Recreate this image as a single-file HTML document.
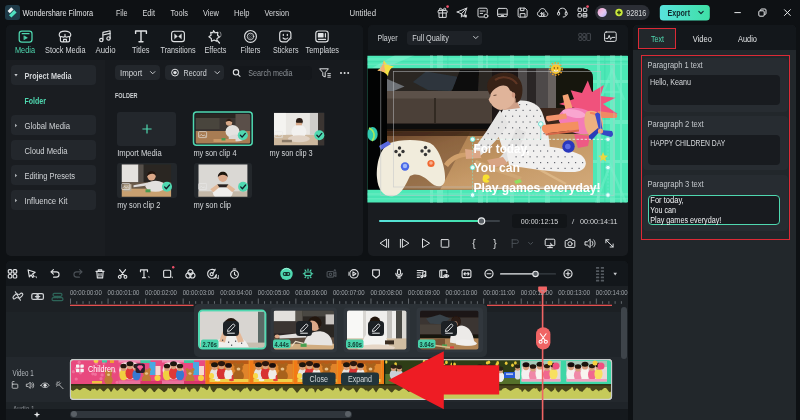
<!DOCTYPE html>
<html><head><meta charset="utf-8"><title>Wondershare Filmora</title>
<style>
html,body{margin:0;padding:0;background:#0e1114;}
body{width:800px;height:420px;overflow:hidden;position:relative;font-family:"Liberation Sans", sans-serif;}
#app{position:absolute;left:0;top:0;width:800px;height:420px;overflow:hidden;background:#0e1114;}
#app div{position:absolute;box-sizing:border-box;}
#app svg{position:absolute;left:0;top:0;will-change:transform;}
svg text{font-family:"Liberation Sans", sans-serif;}
</style></head><body><div id="app">
<div style="left:5.5px;top:25px;width:357.5px;height:231px;background:#171a1e;border-radius:5px;"></div>
<div style="left:5.5px;top:25px;width:357.5px;height:35px;background:#13171b;border-radius:5px 5px 0 0;"></div>
<div style="left:5.5px;top:60px;width:99.5px;height:196px;background:#1a1d21;border-radius:0 0 0 5px;"></div>
<div style="left:10.5px;top:65px;width:85.5px;height:20px;background:#23272c;border-radius:4px;"></div>
<div style="left:10.5px;top:115px;width:85.5px;height:20px;background:#23272c;border-radius:4px;"></div>
<div style="left:10.5px;top:140px;width:85.5px;height:20px;background:#23272c;border-radius:4px;"></div>
<div style="left:10.5px;top:165px;width:85.5px;height:20px;background:#23272c;border-radius:4px;"></div>
<div style="left:10.5px;top:190px;width:85.5px;height:20px;background:#23272c;border-radius:4px;"></div>
<div style="left:115px;top:65.3px;width:45px;height:14.7px;background:#23272c;border-radius:4px;"></div>
<div style="left:165px;top:65.3px;width:59.2px;height:14.7px;background:#23272c;border-radius:4px;"></div>
<div style="left:230px;top:65.6px;width:82.4px;height:14.4px;background:#14171b;border-radius:4px;"></div>
<div style="left:117px;top:112px;width:59px;height:34px;background:#23272c;border-radius:3px;"></div>
<div style="left:367.5px;top:25px;width:260.5px;height:230.7px;background:#191c20;border-radius:5px;"></div>
<div style="left:367.5px;top:25px;width:260.5px;height:25px;background:#13171b;border-radius:5px 5px 0 0;"></div>
<div style="left:367.5px;top:50px;width:260.5px;height:6px;background:#101316;"></div>
<div style="left:367.5px;top:55.7px;width:260px;height:146.8px;background:#4ce8b6;"></div>
<div style="left:407px;top:30.6px;width:75px;height:14px;background:#1e2227;border-radius:3px;"></div>
<div style="left:512px;top:214px;width:54.5px;height:14px;background:#121518;border-radius:3px;"></div>
<div style="left:633px;top:25px;width:162.5px;height:396px;background:#22272b;border-radius:5px 5px 0 0;"></div>
<div style="left:633px;top:25px;width:162.5px;height:25px;background:#13171b;border-radius:5px 5px 0 0;"></div>
<div style="left:638px;top:28px;width:38px;height:21px;background:#22272b;border:1.5px solid #dc2a36;"></div>
<div style="left:641px;top:55px;width:148.5px;height:184.5px;background:transparent;border:1.5px solid #dc2a36;"></div>
<div style="left:643px;top:57.5px;width:145px;height:54px;background:#272c31;border-radius:4px;"></div>
<div style="left:643px;top:115.5px;width:145px;height:54px;background:#272c31;border-radius:4px;"></div>
<div style="left:643px;top:174.5px;width:145px;height:56px;background:#272c31;border-radius:4px;"></div>
<div style="left:647.5px;top:75.2px;width:132.5px;height:30px;background:#181b1f;border-radius:4px;"></div>
<div style="left:647.5px;top:135px;width:132.5px;height:30px;background:#181b1f;border-radius:4px;"></div>
<div style="left:647.5px;top:195px;width:132.5px;height:30px;background:#181b1f;border-radius:4px;border:1px solid #4fd8b0;"></div>
<div style="left:5.5px;top:261px;width:622.5px;height:160px;background:#1c2024;border-radius:5px;"></div>
<div style="left:5.5px;top:261px;width:622.5px;height:25px;background:#13171b;border-radius:5px 5px 0 0;"></div>
<div style="left:5.5px;top:286px;width:622.5px;height:26px;background:#1c2024;"></div>
<div style="left:5.5px;top:312px;width:64.5px;height:108px;background:#1e2327;"></div>
<div style="left:70px;top:312px;width:558px;height:108px;background:#1f2429;"></div>
<div style="left:5.5px;top:357px;width:622.5px;height:45px;background:#23282d;"></div>
<div style="left:70px;top:359px;width:542px;height:41px;background:#c9cc52;border-radius:3px;border:1px solid #e8e8e8;"></div>
<div style="left:193.5px;top:304.4px;width:293.5px;height:52.6px;background:#2b3136;border-radius:5px;"></div>
<div style="left:620.5px;top:306.5px;width:6.5px;height:52px;background:#3e444a;border-radius:3.25px;"></div>
<div style="left:117px;top:163px;width:60px;height:35px;background:#23272b;border-radius:3px;"></div>
<div style="left:193.5px;top:163px;width:58px;height:35px;background:#23272b;border-radius:3px;"></div>
<div style="left:5.5px;top:408.8px;width:622.5px;height:12px;background:#15191d;"></div>
<div style="left:70px;top:410.5px;width:282px;height:7px;background:#30363c;border-radius:3.5px;"></div>
<svg id="overlay" width="800" height="420" viewBox="0 0 800 420">
<defs>
<linearGradient id="av" x1="0" y1="0" x2="1" y2="1"><stop offset="0" stop-color="#f5a0c8"/><stop offset=".55" stop-color="#e8c8f0"/><stop offset="1" stop-color="#a8b0f8"/></linearGradient>
<linearGradient id="ex" x1="0" y1="0" x2="1" y2="0"><stop offset="0" stop-color="#58e2dc"/><stop offset="1" stop-color="#3fe0a6"/></linearGradient>
<filter id="b06" x="-5%" y="-5%" width="110%" height="110%"><feGaussianBlur stdDeviation=".55"/></filter>
<filter id="b1" x="-5%" y="-5%" width="110%" height="110%"><feGaussianBlur stdDeviation="1"/></filter>
<filter id="b2" x="-5%" y="-5%" width="110%" height="110%"><feGaussianBlur stdDeviation="2"/></filter>
<linearGradient id="floor" x1="0" y1="0" x2="1" y2="1"><stop offset="0" stop-color="#6e4628"/><stop offset=".28" stop-color="#b08252"/><stop offset=".6" stop-color="#c69a68"/><stop offset="1" stop-color="#d4ac7c"/></linearGradient>
<filter id="b04" x="-1%" y="-10%" width="102%" height="120%"><feGaussianBlur stdDeviation=".45"/></filter></defs>
<g id="gfx">
<rect x="5" y="5" width="15" height="15" rx="3" fill="#1e3a48"/>
<path d="M11.2 7.2 L13.6 9.4 L9.8 13.2 L7.6 11 Z" fill="#f2f5f6"/>
<path d="M14.2 10 L16.6 12.4 L11.4 17.4 L9 15.2 Z" fill="#4fe0c0"/>
<g transform="translate(442.6 12.6)" fill="none" stroke="#d8dadc" stroke-width="1" stroke-linecap="round" stroke-linejoin="round"><rect x="-4.5" y="-2.2" width="9" height="2.6" rx=".6"/><path d="M-3.6 .4V4.8H3.6V.4M0 -2.2V4.8M0 -2.4C-1.2 -5.4 -4 -4.6 -3 -2.9C-2.4 -2.2 -1 -2.3 0 -2.4C1.2 -5.4 4 -4.6 3 -2.9C2.4 -2.2 1 -2.3 0 -2.4"/></g>
<circle cx="447.6" cy="6.6" r="1.3" fill="#f0506a"/>
<g transform="translate(462 12.6)" fill="none" stroke="#d8dadc" stroke-width="1" stroke-linecap="round" stroke-linejoin="round"><path d="M-4.8 -.6L4.8 -4.6L2 4.2L-.6 1.2L-4.8 -.6ZM-.6 1.2L4.8 -4.6M-.6 1.4V4.6L1 3"/><path d="M2.6 2.2H4.8V4.8H2.6Z" fill="#d8dadc" stroke="none"/></g>
<g transform="translate(482.6 12.6)" fill="none" stroke="#d8dadc" stroke-width="1" stroke-linecap="round" stroke-linejoin="round"><path d="M1.2 4.4H-3.4Q-4.6 4.4 -4.6 3.2V-3.2Q-4.6 -4.4 -3.4 -4.4H3.4Q4.6 -4.4 4.6 -3.2V.6M-2.4 -1.6H2.4M-2.4 .8H0"/><circle cx="3.4" cy="3.4" r="1.9"/></g>
<g transform="translate(502.4 12.6)" fill="none" stroke="#d8dadc" stroke-width="1" stroke-linecap="round" stroke-linejoin="round"><rect x="-4.8" y="-4.2" width="9.6" height="8.2" rx="1.4"/><path d="M-4.6 1.6H4.6M-1.2 3H1.2"/></g>
<g transform="translate(522.6 12.6)" fill="none" stroke="#d8dadc" stroke-width="1" stroke-linecap="round" stroke-linejoin="round"><path d="M-4.5 -3.3Q-4.5 -4.5 -3.3 -4.5H2.4L4.5 -2.4V3.3Q4.5 4.5 3.3 4.5H-3.3Q-4.5 4.5 -4.5 3.3ZM-2.2 -4.4V-2H1.4V-4.4M-2.4 4.4V1H2.4V4.4"/></g>
<g transform="translate(542.6 12.6)" fill="none" stroke="#d8dadc" stroke-width="1" stroke-linecap="round" stroke-linejoin="round"><path d="M-2.8 3.8H2.9C6 3.6 5.8 -.4 3.2 -.8C3 -5 -3 -5.2 -3.4 -1C-6 -.6 -5.8 3.6 -2.8 3.8ZM-1 3V0M-2 1L-1 0L0 1M1.2 0V3M.2 2L1.2 3L2.2 2"/></g>
<g transform="translate(562.4 12.6)" fill="none" stroke="#d8dadc" stroke-width="1" stroke-linecap="round" stroke-linejoin="round"><path d="M-3.8 0V-.8C-3.8 -5.6 3.8 -5.6 3.8 -.8V0M3.8 2.4C3.8 4 2.4 4.4 .8 4.4"/><rect x="-4.8" y="-.6" width="2" height="3.2" rx=".9"/><rect x="2.8" y="-.6" width="2" height="3.2" rx=".9"/></g>
<g transform="translate(582.4 12.6)" fill="none" stroke="#d8dadc" stroke-width="1" stroke-linecap="round" stroke-linejoin="round"><rect x="-4.4" y="-4.4" width="3.4" height="3.4" rx=".6"/><rect x="1" y="-4.4" width="3.4" height="3.4" rx=".6"/><rect x="-4.4" y="1" width="3.4" height="3.4" rx=".6"/><path d="M1 1H4.4V4.4H1ZM1 2.7H4.4"/></g>
<circle cx="587.6" cy="6.6" r="1.3" fill="#f0506a"/>
<rect x="595" y="5" width="54.6" height="15" rx="7.5" fill="#2b2e35"/>
<circle cx="602.2" cy="12.5" r="4.6" fill="url(#av)"/>
<circle cx="619" cy="12.5" r="3.7" fill="#c9e83c"/><path d="M619 10.6V14.4M617.1 12.5H620.9" stroke="#2b3a10" stroke-width="1.4" fill="none"/>
<rect x="659.8" y="5" width="50" height="15.6" rx="3.5" fill="url(#ex)"/>
<path d="M698.8 11.4L701 13.6L703.2 11.4" fill="none" stroke="#10262a" stroke-width="1.1" stroke-linecap="round" stroke-linejoin="round"/>
<path d="M734.400 12.600H740.800" stroke="#e6e8ea" stroke-width="1"/>
<g fill="none" stroke="#e6e8ea" stroke-width="1"><rect x="758.800" y="10.800" width="5.400" height="5.400" rx="1.100"/><path d="M760.600 10.600V10Q760.600 9 761.600 9H765Q766 9 766 10V13.400Q766 14.400 765 14.400H764.400"/></g>
<path d="M784.200 9.400L790.600 15.800M790.600 9.400L784.200 15.800" stroke="#e6e8ea" stroke-width="1"/>
<g transform="translate(25.6 36.6)" fill="none" stroke="#4fd8b0" stroke-width="1.25" stroke-linecap="round" stroke-linejoin="round"><rect x="-6.4" y="-5.4" width="12.8" height="10.8" rx="2.6"/><path d="M-3.4 -2.9H3.4"/><path d="M-1.4 -.6L1.8 1.2L-1.4 3Z" fill="#4fd8b0" stroke-width=".6"/></g>
<g transform="translate(65 36.4)" fill="none" stroke="#dfe1e3" stroke-width="1.15" stroke-linecap="round" stroke-linejoin="round"><path d="M-5.8 -1.6C-5.8 -6.6 5.8 -6.6 5.8 -1.6C5.8 .4 4 .6 3 .2C2 1 1 .8 0 0C-1 .8 -2 1 -3 .2C-4 .6 -5.8 .4 -5.8 -1.600ZM-4.6 .8V4Q-4.6 5.4 -3.200 5.4H3.2Q4.6 5.4 4.6 4V.8M-1.4 5.2V3H1.4V5.2M0 0V-2"/></g>
<g transform="translate(105.5 36.4)" fill="none" stroke="#dfe1e3" stroke-width="1.15" stroke-linecap="round" stroke-linejoin="round"><path d="M-2.6 3.4V-4L4.6 -5.6V1.8"/><circle cx="-4.2" cy="3.6" r="1.7"/><circle cx="3" cy="2" r="1.7"/><path d="M-2.600 -1.4L4.6 -3"/></g>
<g transform="translate(141 36.4)" fill="none" stroke="#dfe1e3" stroke-width="1.4" stroke-linecap="round" stroke-linejoin="round"><path d="M-5.4 -3V-5.4H5.4V-3M0 -5.400V5.4M-2 5.4H2"/></g>
<g transform="translate(178 36.4)" fill="none" stroke="#dfe1e3" stroke-width="1.15" stroke-linecap="round" stroke-linejoin="round"><rect x="-6.4" y="-5.2" width="12.8" height="10.4" rx="2.4"/><path d="M-3.200 -2.2L-.6 0L-3.2 2.2ZM3.2 -2.2L.6 0L3.2 2.200Z" fill="#dfe1e3" stroke-width=".5"/></g>
<g transform="translate(214.5 36.4)" fill="none" stroke="#dfe1e3" stroke-width="1.15" stroke-linecap="round" stroke-linejoin="round"><path d="M-1 -5.800L.6 -3.6L3.400 -4L3 -1.2L5 .6L2.600 2L2.2 4.800L-.4 3.6L-3 4.800L-3.200 2L-5.600 .4L-3.4 -1.2L-3.800 -4L-1.600 -3.6Z"/><path d="M2.8 4.200L5 6.600" stroke-width="1.3"/><path d="M5.6 -4.400C6.8 -3 6.8 -1 6 .4" stroke-width=".8" opacity=".7"/></g>
<g transform="translate(250.5 36.4)" fill="none" stroke="#dfe1e3" stroke-width="1.15" stroke-linecap="round" stroke-linejoin="round"><circle r="5.900"/><circle r="3.300" stroke-width=".8"/><path d="M-2.2 -2L1.200 1.600M-2.8 -.2L.200 2.600M-.6 -2.800L2.400 0" stroke-width=".5" opacity=".8"/></g>
<g transform="translate(285.5 36.4)" fill="none" stroke="#dfe1e3" stroke-width="1.15" stroke-linecap="round" stroke-linejoin="round"><path d="M-5.8 -2.600Q-5.800 -5.400 -3 -5.400H2.6Q5.400 -5.400 5.400 -2.600V1L1.400 5.400H-3Q-5.800 5.400 -5.800 2.600ZM-2.200 -2.200V-1M1.800 -2.200V-1M-2.400 1.600C-1 3 1 3 2.200 1.600"/><path d="M4.400 3.600L6 2" stroke-width=".8" opacity=".7"/></g>
<g transform="translate(322 36.4)" fill="none" stroke="#dfe1e3" stroke-width="1.15" stroke-linecap="round" stroke-linejoin="round"><rect x="-6.200" y="-5.400" width="12.400" height="10.800" rx="2.600"/><path d="M-3.600 -2.800H1V.6H-3.600Z" fill="#dfe1e3"/><path d="M3.400 -2.800V.6M-3.600 2.900H3.600" /></g>
<path d="M14.4 74L17.600 74L16 76.400Z" fill="#c8cbce"/>
<path d="M15 123.8L17.2 125.5L15 127.2Z" fill="#a8acb0"/>
<path d="M15 173.8L17.2 175.5L15 177.2Z" fill="#a8acb0"/>
<path d="M15 198.8L17.2 200.5L15 202.2Z" fill="#a8acb0"/>
<path d="M150.500 71.600L152.700 73.800L154.900 71.600" fill="none" stroke="#c8cbce" stroke-width="1" stroke-linecap="round" stroke-linejoin="round"/>
<circle cx="175" cy="72.600" r="3.400" fill="none" stroke="#dfe1e3" stroke-width="1"/><circle cx="175" cy="72.600" r="1.700" fill="#dfe1e3"/>
<path d="M215.100 71.600L217.300 73.800L219.500 71.600" fill="none" stroke="#c8cbce" stroke-width="1" stroke-linecap="round" stroke-linejoin="round"/>
<circle cx="236" cy="72.300" r="2.700" fill="none" stroke="#dfe1e3" stroke-width="1.100"/><path d="M238 74.300L240 76.300" stroke="#dfe1e3" stroke-width="1.100" stroke-linecap="round"/>
<path d="M319.600 68.800H328.400L325.200 72.600V77L322.800 75.800V72.600Z" fill="none" stroke="#dfe1e3" stroke-width="1" stroke-linejoin="round"/><path d="M327.400 73.600H330.800M327.400 75.400H330.800M327.400 77.200H330.800" stroke="#dfe1e3" stroke-width=".9"/>
<circle cx="341" cy="72.900" r="1" fill="#dfe1e3"/><circle cx="344.600" cy="72.900" r="1" fill="#dfe1e3"/><circle cx="348.200" cy="72.900" r="1" fill="#dfe1e3"/>
<path d="M142.400 129H151.600M147 124.400V133.600" stroke="#4fd8b0" stroke-width="1.2" fill="none"/>
<rect x="193.500" y="112" width="58.700" height="33.300" rx="3" fill="#1b1f23" stroke="#4fd8b0" stroke-width="1.500"/>
<clipPath id="c1"><rect x="195.5" y="114" width="54.7" height="29.4" rx="1.5"/></clipPath>
<g clip-path="url(#c1)"><g transform="translate(195.5 114)" filter="url(#b06)"><rect width="55" height="30" fill="#3b3530"/>
<rect y="17" width="55" height="13" fill="#a87c52"/>
<rect x="0" y="4" width="24" height="11" fill="#4a443e"/>
<rect x="0" y="0" width="55" height="4" fill="#2a2623"/>
<rect x="40" y="0" width="15" height="17" fill="#5a5048"/>
<ellipse cx="37" cy="17.500" rx="7" ry="6.500" fill="#e4e2e0"/>
<ellipse cx="41" cy="24" rx="8" ry="3.500" fill="#dcdad8"/>
<circle cx="33.500" cy="8.500" r="3.200" fill="#d8a888"/>
<path d="M30.300 8C30.300 3.500 37 3.500 37 8.500C35 6.500 32 6.500 30.300 8Z" fill="#2a1c14"/>
<rect x="18" y="25" width="22" height="3" fill="#c89868"/>
<rect x="26" y="24" width="4" height="2.500" fill="#4a9a50"/></g></g>
<g transform="translate(202.6 134.6)" fill="none" stroke="#e8e8e8" stroke-width=".7" opacity=".9"><rect x="-4" y="-3" width="8" height="6" rx=".8"/><path d="M-3.600 2L-1.400 -.2L.4 1.400L1.600 .4L3.600 2.200"/></g>
<circle cx="242.8" cy="135.2" r="5" fill="#4fd8b0"/><path d="M240.4 135.29999999999998L242.10000000000002 137.1L245.3 133.39999999999998" fill="none" stroke="#12202a" stroke-width="1.300" stroke-linecap="round" stroke-linejoin="round"/>
<clipPath id="c2"><rect x="273.9" y="112.8" width="50.3" height="32.5" rx="0"/></clipPath>
<g clip-path="url(#c2)"><g transform="translate(273.9 112.8)" filter="url(#b06)"><rect width="51" height="33" fill="#e9e7e3"/>
<rect y="22" width="51" height="11" fill="#cdb89e"/>
<rect x="0" y="0" width="12" height="22" fill="#f4f3f0"/>
<rect x="44" y="0" width="7" height="33" fill="#3a3632"/>
<rect x="36" y="0" width="8" height="22" fill="#cfcdca"/>
<ellipse cx="25" cy="19" rx="7.500" ry="7" fill="#f2f1ef"/>
<ellipse cx="25" cy="26" rx="11" ry="3.500" fill="#e0d2c4"/>
<circle cx="25.500" cy="8.500" r="3.400" fill="#2a1c14"/>
<rect x="22" y="10" width="6" height="2.500" fill="#d8a888"/>
<rect x="8" y="27" width="10" height="2.500" fill="#8a7a68"/></g></g>
<g transform="translate(278.6 134.6)" fill="none" stroke="#e8e8e8" stroke-width=".7" opacity=".9"><rect x="-4" y="-3" width="8" height="6" rx=".8"/><path d="M-3.600 2L-1.400 -.2L.4 1.400L1.600 .4L3.600 2.200"/></g>
<circle cx="319.3" cy="135.2" r="5" fill="#4fd8b0"/><path d="M316.90000000000003 135.29999999999998L318.6 137.1L321.8 133.39999999999998" fill="none" stroke="#12202a" stroke-width="1.300" stroke-linecap="round" stroke-linejoin="round"/>
<clipPath id="c3"><rect x="121.5" y="164.3" width="49.7" height="32.5" rx="0"/></clipPath>
<g clip-path="url(#c3)"><g transform="translate(121.5 164.3)" filter="url(#b06)"><rect width="50" height="33" fill="#2c2824"/>
<rect x="0" y="0" width="17" height="18" fill="#e4e2de"/>
<rect x="17" y="0" width="5" height="18" fill="#55504a"/>
<rect y="24" width="50" height="9" fill="#c8a070"/>
<rect y="18" width="50" height="6" fill="#6a5a4a"/>
<ellipse cx="34" cy="22" rx="10" ry="5.500" fill="#e2e0de"/>
<path d="M12 21L28 18L28 21L12 23Z" fill="#dedcda"/>
<circle cx="30" cy="12" r="4.200" fill="#dca888"/>
<path d="M25.500 12C25 5.500 35 5.500 34.500 11.500C32 8.500 28 9 25.500 12Z" fill="#20140e"/>
<rect x="24" y="25" width="5" height="3" fill="#4a9a50"/>
<rect x="2" y="20" width="8" height="7" fill="#b8a890"/></g></g>
<g transform="translate(125.8 186.5)" fill="none" stroke="#e8e8e8" stroke-width=".7" opacity=".9"><rect x="-4" y="-3" width="8" height="6" rx=".8"/><path d="M-3.600 2L-1.400 -.2L.4 1.400L1.600 .4L3.600 2.200"/></g>
<circle cx="167" cy="186.8" r="5" fill="#4fd8b0"/><path d="M164.6 186.9L166.3 188.70000000000002L169.5 185.0" fill="none" stroke="#12202a" stroke-width="1.300" stroke-linecap="round" stroke-linejoin="round"/>
<clipPath id="c4"><rect x="198.3" y="164.3" width="49.1" height="32.5" rx="0"/></clipPath>
<g clip-path="url(#c4)"><g transform="translate(198.3 164.3)" filter="url(#b06)"><rect width="50" height="33" fill="#dad8d4"/>
<rect y="27" width="50" height="6" fill="#c4b8a8"/>
<ellipse cx="24.500" cy="28" rx="10" ry="8" fill="#eeedeb"/>
<circle cx="24.500" cy="13" r="4.600" fill="#dcaa8c"/>
<path d="M19.600 13C19 5.500 30 5.500 29.400 13C28 9.500 21 9.500 19.600 13Z" fill="#1c120c"/>
<rect x="19" y="20" width="11" height="3" fill="#2a2420"/>
<path d="M12 25L19 20L21 23L15 28Z" fill="#e0b898"/>
<path d="M37 25L30 20L28 23L34 28Z" fill="#e0b898"/></g></g>
<g transform="translate(202.6 186.5)" fill="none" stroke="#e8e8e8" stroke-width=".7" opacity=".9"><rect x="-4" y="-3" width="8" height="6" rx=".8"/><path d="M-3.600 2L-1.400 -.2L.4 1.400L1.600 .4L3.600 2.200"/></g>
<circle cx="243.1" cy="186.8" r="5" fill="#4fd8b0"/><path d="M240.7 186.9L242.4 188.70000000000002L245.6 185.0" fill="none" stroke="#12202a" stroke-width="1.300" stroke-linecap="round" stroke-linejoin="round"/>
<path d="M473.600 36.400L475.800 38.600L478 36.400" fill="none" stroke="#c8cbce" stroke-width="1" stroke-linecap="round" stroke-linejoin="round"/>
<g fill="none" stroke="#50565c" stroke-width=".8"><rect x="578.800" y="33.400" width="3" height="3" rx=".6"/><rect x="582.800" y="33.400" width="3" height="3" rx=".6"/><rect x="578.800" y="37.400" width="3" height="3" rx=".6"/><rect x="582.800" y="37.400" width="3" height="3" rx=".6"/><rect x="586.800" y="33.400" width="3.600" height="7" rx=".6"/></g>
<g fill="none" stroke="#dfe1e3" stroke-width="1" stroke-linejoin="round" stroke-linecap="round"><rect x="604.600" y="32" width="11.600" height="9.400" rx="1.600"/><path d="M606 38.400L608 38.400L609.200 35.400L610.600 39.400L611.800 37.400L614.800 37.400"/></g>
<clipPath id="pvc"><rect x="367.400" y="55.700" width="260.200" height="146.800"/></clipPath>
<clipPath id="phc"><path d="M387 68.500H583Q593 68.500 593 78.500V189.800H387Z"/></clipPath>
<g clip-path="url(#pvc)"><rect x="367" y="55" width="262" height="149" fill="#4ce8b6"/>
<g opacity=".26" fill="#c0fce8">
<rect x="367" y="58" width="262" height="2.500" opacity=".6"/><rect x="367" y="63.500" width="262" height="1.500" opacity=".6"/>
<rect x="367" y="193" width="262" height="2.500" opacity=".6"/><rect x="367" y="198" width="262" height="1.500" opacity=".6"/>
<rect x="430" y="55" width="3" height="149"/><rect x="437" y="55" width="6" height="149"/>
<rect x="460" y="55" width="2" height="149"/><rect x="478" y="55" width="5" height="149"/><rect x="486" y="55" width="2" height="149"/>
<rect x="510" y="55" width="4" height="149"/><rect x="528" y="55" width="2" height="149"/><rect x="545" y="55" width="5" height="149"/>
<rect x="597" y="55" width="3" height="149"/><rect x="610" y="55" width="5" height="149"/><rect x="620" y="55" width="2" height="149"/>
<rect x="593" y="80" width="36" height="3"/><rect x="593" y="120" width="36" height="4"/><rect x="593" y="160" width="36" height="3"/>
</g>
<g opacity=".14" fill="#18b890">
<rect x="367" y="61" width="262" height="1"/><rect x="367" y="196.500" width="262" height="1"/>
<rect x="447" y="55" width="1.500" height="149"/><rect x="497" y="55" width="1.500" height="149"/><rect x="560" y="55" width="1.500" height="149"/><rect x="604" y="55" width="1.500" height="149"/>
</g>
<path d="M372 68L395 55H415L385 68Z" fill="#8af4d2" opacity=".5"/>
<path d="M600 100L612 70L624 100M604 92H620" stroke="#7af2cc" stroke-width="2.500" fill="none" opacity=".45"/>
<path d="M596 203L610 165L626 203" stroke="#7af2cc" stroke-width="2.500" fill="none" opacity=".45"/>
<rect x="367" y="68.500" width="21" height="121.300" fill="#020303"/>
<path d="M387 68.500H583Q593 68.500 593 78.500V189.800H387Z" fill="#1d1917"/>
<g clip-path="url(#phc)"><g filter="url(#b06)">
 <rect x="380" y="60" width="220" height="70" fill="#1a1614"/>
 <rect x="518" y="66" width="38" height="50" fill="#4e4a48"/>
 <rect x="527" y="66" width="9" height="50" fill="#2c2826"/>
 <rect x="548" y="66" width="8" height="50" fill="#68625e"/>
 <rect x="556" y="66" width="44" height="70" fill="#151211"/>
 <rect x="380" y="124" width="220" height="70" fill="url(#floor)"/>
 <rect x="515" y="108" width="80" height="26" fill="#3a281c"/>
 <rect x="380" y="122" width="150" height="9" fill="#100c0a"/>
 <rect x="380" y="129" width="120" height="7" fill="#2c1a10" opacity=".7"/>
 <rect x="380" y="98" width="112" height="25.500" rx="2" fill="#4b4139"/>
 <rect x="380" y="90.500" width="112" height="8" fill="#5b5148"/>
 <rect x="380" y="69" width="112" height="22" fill="#2b2724"/>
 <path d="M435 98V123" stroke="#2a2420" stroke-width="1.600"/>
 <path d="M413 82L426 71.500L464.500 78L450.500 91L428 90Z" fill="#2d363e"/>
 <path d="M386 78.500L404.500 86.500L393.600 91L386 91Z" fill="#6c7074"/>
 <path d="M460 70H479L478 91H452Z" fill="#0b0909"/>
 <path d="M387 132L470 132L440 190L387 190Z" fill="#3a2216" opacity=".3"/>
 <path d="M444 164C452 152 468 150 480 155L482 158.500C470 154 456 156 448 167Z" fill="#d0a06c"/>
 <path d="M476 160L522 177L520 180L474 164Z" fill="#cfa674"/>
 <path d="M522 160L566 184" stroke="#dcb686" stroke-width="2.500"/>
 <!-- kid -->
 <path d="M497 132C497 120 502 106 512 102C524 98 538 102 542 112C548 128 550 142 550 154L522 156L503 150Z" fill="#edeceb"/>
 <path d="M500 110C492 122 482 140 473 149L480 156C491 147 502 134 508 124Z" fill="#e6e5e4"/>
 <path d="M516 128C512 140 506 152 498 159L505 164C514 156 522 144 526 132Z" fill="#e2e1e0"/>
 <path d="M506 149C522 143 562 145 581 155C589 161 587 171 575 172C556 172.500 528 169 509 165Z" fill="#f1f0ef"/>
 <path d="M465 149L480 151L481 158L466 159Z" fill="#dca888"/>
 <path d="M487 160L503 157L508 164L492 168Z" fill="#d8a484"/>
 <path d="M505 100L516 98L520 108L504 110Z" fill="#cfa088"/>
 <path d="M492 87C496 83 512 84 516 92L514 102C511 108 503 111 498 109.500C495 108 492 106 491.500 104L490 102.500L488.600 99.500L490.500 96C490 93 491 90 492 87Z" fill="#e0b49a"/>
 <path d="M490 95C482 82 492 72 506 72.500C519 73 525 84 521.500 97C520.500 100.500 518 103 515.500 102.500C516.500 98 514 92 510 90.500C509 87 506 85 503 85.500C498 86 493 89 490 95Z" fill="#372117"/>
 <path d="M495 80C501 75.500 512 76.500 517 84" stroke="#6c3e2a" stroke-width="2.200" fill="none" opacity=".75"/>
 <ellipse cx="513.500" cy="95" rx="1.800" ry="2.800" fill="#d29a82"/>
 <path d="M493.500 95.500L496.500 95" stroke="#4a2e22" stroke-width=".8"/>
</g>
<g fill="#2a2e3a" opacity=".7"><rect x="519.0" y="104.0" width="1.200" height="1.200"/><rect x="526.0" y="104.0" width="1.200" height="1.200"/><rect x="508.5" y="109.8" width="1.200" height="1.200"/><rect x="515.5" y="109.8" width="1.200" height="1.200"/><rect x="522.5" y="109.8" width="1.200" height="1.200"/><rect x="529.5" y="109.8" width="1.200" height="1.200"/><rect x="536.5" y="109.8" width="1.200" height="1.200"/><rect x="505.0" y="115.6" width="1.200" height="1.200"/><rect x="512.0" y="115.6" width="1.200" height="1.200"/><rect x="519.0" y="115.6" width="1.200" height="1.200"/><rect x="526.0" y="115.6" width="1.200" height="1.200"/><rect x="533.0" y="115.6" width="1.200" height="1.200"/><rect x="540.0" y="115.6" width="1.200" height="1.200"/><rect x="501.5" y="121.4" width="1.200" height="1.200"/><rect x="508.5" y="121.4" width="1.200" height="1.200"/><rect x="515.5" y="121.4" width="1.200" height="1.200"/><rect x="522.5" y="121.4" width="1.200" height="1.200"/><rect x="529.5" y="121.4" width="1.200" height="1.200"/><rect x="536.5" y="121.4" width="1.200" height="1.200"/><rect x="498.0" y="127.2" width="1.200" height="1.200"/><rect x="505.0" y="127.2" width="1.200" height="1.200"/><rect x="512.0" y="127.2" width="1.200" height="1.200"/><rect x="519.0" y="127.2" width="1.200" height="1.200"/><rect x="526.0" y="127.2" width="1.200" height="1.200"/><rect x="533.0" y="127.2" width="1.200" height="1.200"/><rect x="540.0" y="127.2" width="1.200" height="1.200"/><rect x="487.5" y="133.0" width="1.200" height="1.200"/><rect x="494.5" y="133.0" width="1.200" height="1.200"/><rect x="501.5" y="133.0" width="1.200" height="1.200"/><rect x="508.5" y="133.0" width="1.200" height="1.200"/><rect x="515.5" y="133.0" width="1.200" height="1.200"/><rect x="522.5" y="133.0" width="1.200" height="1.200"/><rect x="529.5" y="133.0" width="1.200" height="1.200"/><rect x="536.5" y="133.0" width="1.200" height="1.200"/><rect x="543.5" y="133.0" width="1.200" height="1.200"/><rect x="484.0" y="138.8" width="1.200" height="1.200"/><rect x="491.0" y="138.8" width="1.200" height="1.200"/><rect x="505.0" y="138.8" width="1.200" height="1.200"/><rect x="512.0" y="138.8" width="1.200" height="1.200"/><rect x="519.0" y="138.8" width="1.200" height="1.200"/><rect x="526.0" y="138.8" width="1.200" height="1.200"/><rect x="533.0" y="138.8" width="1.200" height="1.200"/><rect x="540.0" y="138.8" width="1.200" height="1.200"/><rect x="480.5" y="144.6" width="1.200" height="1.200"/><rect x="487.5" y="144.6" width="1.200" height="1.200"/><rect x="508.5" y="144.6" width="1.200" height="1.200"/><rect x="515.5" y="144.6" width="1.200" height="1.200"/><rect x="522.5" y="144.6" width="1.200" height="1.200"/><rect x="529.5" y="144.6" width="1.200" height="1.200"/><rect x="536.5" y="144.6" width="1.200" height="1.200"/><rect x="543.5" y="144.6" width="1.200" height="1.200"/><rect x="484.0" y="150.4" width="1.200" height="1.200"/><rect x="512.0" y="150.4" width="1.200" height="1.200"/><rect x="519.0" y="150.4" width="1.200" height="1.200"/><rect x="526.0" y="150.4" width="1.200" height="1.200"/><rect x="533.0" y="150.4" width="1.200" height="1.200"/><rect x="540.0" y="150.4" width="1.200" height="1.200"/><rect x="547.0" y="150.4" width="1.200" height="1.200"/><rect x="554.0" y="150.4" width="1.200" height="1.200"/><rect x="515.5" y="156.2" width="1.200" height="1.200"/><rect x="522.5" y="156.2" width="1.200" height="1.200"/><rect x="529.5" y="156.2" width="1.200" height="1.200"/><rect x="536.5" y="156.2" width="1.200" height="1.200"/><rect x="543.5" y="156.2" width="1.200" height="1.200"/><rect x="550.5" y="156.2" width="1.200" height="1.200"/><rect x="557.5" y="156.2" width="1.200" height="1.200"/><rect x="564.5" y="156.2" width="1.200" height="1.200"/><rect x="571.5" y="156.2" width="1.200" height="1.200"/><rect x="512.0" y="162.0" width="1.200" height="1.200"/><rect x="519.0" y="162.0" width="1.200" height="1.200"/><rect x="526.0" y="162.0" width="1.200" height="1.200"/><rect x="533.0" y="162.0" width="1.200" height="1.200"/><rect x="540.0" y="162.0" width="1.200" height="1.200"/><rect x="547.0" y="162.0" width="1.200" height="1.200"/><rect x="554.0" y="162.0" width="1.200" height="1.200"/><rect x="561.0" y="162.0" width="1.200" height="1.200"/><rect x="568.0" y="162.0" width="1.200" height="1.200"/><rect x="575.0" y="162.0" width="1.200" height="1.200"/><rect x="582.0" y="162.0" width="1.200" height="1.200"/><rect x="536.5" y="167.8" width="1.200" height="1.200"/><rect x="543.5" y="167.8" width="1.200" height="1.200"/><rect x="550.5" y="167.8" width="1.200" height="1.200"/><rect x="557.5" y="167.8" width="1.200" height="1.200"/><rect x="564.5" y="167.8" width="1.200" height="1.200"/><rect x="571.5" y="167.8" width="1.200" height="1.200"/><rect x="578.5" y="167.8" width="1.200" height="1.200"/></g></g>
<!-- pink burst + plane -->
<path d="M587.800 80.500L592 92L604 85L600.500 96L615.700 97.800L603 104L617.800 114L600 113L598 126L586 116L572 122L575 108L559 104L574 99L570.700 90.300L582 93Z" fill="#f0527c"/>
<g filter="url(#b06)">
<path d="M562.500 95.500L568 94L572.500 108L565.500 110Z" fill="#f4a274"/>
<path d="M598 111L616 113.500Q618.500 116 616 118L598 118Z" fill="#f08a64"/>
<ellipse cx="579" cy="121" rx="21" ry="12.500" transform="rotate(14 579 121)" fill="#f47cb6"/>
<ellipse cx="574" cy="113.500" rx="12" ry="4" transform="rotate(10 574 113.500)" fill="#f9a6d0"/>
<path d="M586 112C594 108 603 114 603 124C603 132 596 137 589 135C584 128 583 119 586 112Z" fill="#eeb080"/>
<path d="M590 113C596 112 600 118 600 124C600 130 596 134 592 134" stroke="#f4845c" stroke-width="2" fill="none"/>
<path d="M546.500 116L566 113.500L567 118.500L548 121.500Q545 119 546.500 116Z" fill="#f4946c"/>
<path d="M542.500 125L578 121.500L579 129.500L545 133.500Q540.500 130 542.500 125Z" fill="#f4905f"/>
<path d="M545 133.500L579 129.500L579 131.500L546 135.500Z" fill="#d86848"/>
<path d="M574 134L590 136L588 146L578 148Z" fill="#ee5a84"/>
<circle cx="568.500" cy="146.500" r="6.200" fill="#2a38bc"/>
<circle cx="567.800" cy="146.500" r="2.800" fill="#5c6ce4"/>
<path d="M599 130L595 114Q597.500 111 600 114L602.500 130Z" fill="#3a4ccc"/>
<path d="M600 130L612 131Q614.500 135 611 137L600 134Z" fill="#3446c4"/>
<path d="M600 131L592 140Q588 139 589 135.500L598 128Z" fill="#2c3cb8"/>
<circle cx="600.500" cy="131" r="2.600" fill="#f0a070"/>
</g>
<!-- controller -->
<g filter="url(#b06)">
<path d="M390 143C400 139 420 139 430 143C440 148 446 170 445 180C444 188 436 188 430 182C424 176 416 172 410 176C406 184 402 194 394 196C384 198 378 190 377 178C376 164 380 148 390 143Z" fill="#f1ecdc"/>
<path d="M379 146L388 141L391 144L381 150Z" fill="#5868e0"/>
<circle cx="399.500" cy="148" r="1.700" fill="#343434"/><circle cx="396" cy="151.500" r="1.700" fill="#343434"/><circle cx="403" cy="151.500" r="1.700" fill="#343434"/><circle cx="399.500" cy="155" r="1.700" fill="#343434"/>
<circle cx="425.500" cy="147.500" r="1.700" fill="#343434"/><circle cx="422" cy="151" r="1.700" fill="#343434"/><circle cx="429" cy="151" r="1.700" fill="#343434"/><circle cx="425.500" cy="154.500" r="1.700" fill="#343434"/>
<circle cx="405" cy="166.500" r="4.200" fill="#4868e8"/><circle cx="405" cy="166" r="2.200" fill="#a0b8f8"/>
<circle cx="431" cy="163.500" r="3.600" fill="#f06830"/><circle cx="431" cy="163" r="1.800" fill="#f8b090"/>
</g>
<!-- deco -->
<path d="M384 60Q385.500 65.500 394 66.500Q388.500 69 388 76.300Q385 71 377.400 70.500Q383 67 384 60Z" fill="#f2e244"/>
<path d="M384 60Q383 67 377.400 70.500Q382 70.800 385.500 72.500Q384 67 384 60Z" fill="#f4b070"/>
<circle cx="556" cy="69" r="5" fill="#f8c830"/><circle cx="556" cy="69" r="6.200" fill="none" stroke="#f0a020" stroke-width="1.500" stroke-dasharray="1.500 1.500"/>
<circle cx="554.300" cy="68" r=".7" fill="#603010"/><circle cx="557.700" cy="68" r=".7" fill="#603010"/><path d="M554 70.500Q556 72 558 70.500" stroke="#fff" stroke-width="1" fill="none"/>
<ellipse cx="372.500" cy="134" rx="5.200" ry="7" fill="#30c8b0"/><path d="M369 128C374 130 376 136 372 141" stroke="#a0e860" stroke-width="1.600" fill="none"/>
<path d="M603 152L604.600 155.400L608 155.800L605.400 158L606.200 161.400L603 159.600L600 161.400L600.800 158L598.200 155.800L601.600 155.400Z" fill="#e8d840"/>
<path d="M483 176C486 173 490 175 489.500 178L487 179.500L489.500 181C488 184 483 183 482.500 179.500Z" fill="#f8e030"/>
<path d="M514 181L520 179L522 182L516 184Z" fill="#90e060"/>
<!-- selection boxes -->
<g fill="none" stroke="#c0c4c8" stroke-width=".7" opacity=".7">
<rect x="380.800" y="64.300" width="233.200" height="131"/>
<rect x="393.500" y="71.400" width="207.200" height="115.600"/>
</g>
<path d="M472.600 139.300H608" stroke="#e8fff8" stroke-width=".8" stroke-dasharray="2.500 1.500" fill="none"/>
<path d="M472.600 139.300V195M608 139.300V195M472.600 195H608" stroke="#7fe8d8" stroke-width=".7" stroke-dasharray="2 1.500" fill="none" opacity=".8"/>
<path d="M540.800 124V139" stroke="#7fe8d8" stroke-width=".7" fill="none"/>
<g fill="#e8fffa" stroke="#6fe0d0" stroke-width="1">
<circle cx="472.600" cy="139.300" r="2.300"/><circle cx="472.600" cy="167.600" r="2.300"/><circle cx="472.600" cy="195" r="2.300"/>
<circle cx="608" cy="139.300" r="2.300"/><circle cx="608" cy="167.600" r="2.300"/><circle cx="608" cy="195" r="2.300"/>
<circle cx="540.800" cy="124" r="2.300"/>
</g>
</g>
<g clip-path="url(#pvc)" font-weight="bold" fill="#ffffff" style="font-family:'DejaVu Sans','Liberation Sans',sans-serif"><text x="473.500" y="152.600" font-size="12.5" textLength="56" lengthAdjust="spacingAndGlyphs">For today,</text><text x="473.500" y="171.700" font-size="12.5" textLength="46.5" lengthAdjust="spacingAndGlyphs">You can</text><text x="473.500" y="191.700" font-size="12.5" textLength="127" lengthAdjust="spacingAndGlyphs">Play games everyday!</text></g>
<path d="M474 188.300H600" stroke="#ffffff" stroke-width=".9" opacity=".85" clip-path="url(#pvc)"/>
<rect x="379" y="220" width="121" height="2" rx="1" fill="#3a4046"/>
<rect x="379" y="219.900" width="102.500" height="2.200" rx="1.100" fill="url(#ex)"/>
<circle cx="481.500" cy="221" r="3.200" fill="#5a6066" stroke="#e8eaec" stroke-width="1.200"/>
<g transform="translate(384 243.4)" fill="none" stroke="#dfe1e3" stroke-width="1" stroke-linecap="round" stroke-linejoin="round"><path d="M2.600 -4V4L-3.600 0ZM4.600 -4V4"/></g>
<g transform="translate(405 243.4)" fill="none" stroke="#dfe1e3" stroke-width="1" stroke-linecap="round" stroke-linejoin="round"><path d="M-2.600 -4V4L3.600 0ZM-4.600 -4V4"/></g>
<g transform="translate(425.5 243.4)" fill="none" stroke="#dfe1e3" stroke-width="1" stroke-linecap="round" stroke-linejoin="round"><path d="M-3 -4.200V4.200L3.800 0Z"/></g>
<g transform="translate(445 243.4)" fill="none" stroke="#dfe1e3" stroke-width="1" stroke-linecap="round" stroke-linejoin="round"><rect x="-3.800" y="-3.800" width="7.600" height="7.600" rx=".6"/></g>
<g transform="translate(515 243.4)" fill="none" stroke="#4a5056" stroke-width="1" stroke-linecap="round" stroke-linejoin="round"><path d="M-2.800 -3.800V4.200M-2.800 -3.600H1.600Q3.400 -3.600 3.400 -1.800Q3.400 0 1.600 0H-2.800"/></g>
<path d="M528.600 242.400L530.600 244.400L532.600 242.400" fill="none" stroke="#4a5056" stroke-width="1" stroke-linecap="round" stroke-linejoin="round"/>
<g transform="translate(550 243.4)" fill="none" stroke="#dfe1e3" stroke-width="1" stroke-linecap="round" stroke-linejoin="round"><rect x="-4.800" y="-4.200" width="9.600" height="6.400" rx="1"/><path d="M-2.400 4.200H2.400M0 2.400V4"/><path d="M.6 -.2L3 2.200L1.400 2.200Z" fill="#dfe1e3" stroke-width=".6"/></g>
<g transform="translate(570 243.4)" fill="none" stroke="#dfe1e3" stroke-width="1" stroke-linecap="round" stroke-linejoin="round"><path d="M-4.800 -2.200Q-4.800 -3 -4 -3H-2.400L-1.600 -4.400H1.600L2.400 -3H4Q4.800 -3 4.800 -2.200V3.200Q4.800 4 4 4H-4Q-4.800 4 -4.800 3.200Z"/><circle cx="0" cy=".4" r="2.100"/></g>
<g transform="translate(590 243.4)" fill="none" stroke="#dfe1e3" stroke-width="1" stroke-linecap="round" stroke-linejoin="round"><path d="M-4.600 -1.600H-2.600L.2 -4.200V4.200L-2.600 1.600H-4.600Z"/><path d="M2 -2.200C3.200 -1 3.200 1 2 2.200M3.600 -3.600C5.600 -1.600 5.600 1.600 3.600 3.600"/></g>
<g transform="translate(609.5 243.4)" fill="none" stroke="#dfe1e3" stroke-width="1" stroke-linecap="round" stroke-linejoin="round"><path d="M-3.600 -3.600L3.600 3.600M-3.600 -.6V-3.600H-.6M3.600 .6V3.600H.6"/></g>
<g transform="translate(12.5 273.8)" fill="none" stroke="#dfe1e3" stroke-width="1.300" stroke-linecap="round" stroke-linejoin="round"><g transform="scale(.88)"><rect x="-4.800" y="-4.800" width="4" height="4" rx="1.300"/><rect x=".8" y="-4.800" width="4" height="4" rx="1.300"/><rect x="-4.800" y=".8" width="4" height="4" rx="1.300"/><rect x=".8" y=".8" width="4" height="4" rx="1.300"/></g></g>
<g transform="translate(32 273.8)" fill="none" stroke="#dfe1e3" stroke-width="1.300" stroke-linecap="round" stroke-linejoin="round"><g transform="scale(.88)"><path d="M-4.400 -4.400L3.600 -1.800L.6 .2L2.400 3L.8 4L-1 1.200L-3 3.400Z"/><path d="M3.400 3.200H5.400V5.200Z" fill="#dfe1e3" stroke="none"/></g></g>
<g transform="translate(55 273.8)" fill="none" stroke="#dfe1e3" stroke-width="1.300" stroke-linecap="round" stroke-linejoin="round"><g transform="scale(.88)"><path d="M-1.800 -4.800L-4.600 -2.200L-1.800 .4M-4.400 -2.200H1.600C5.600 -2.200 5.600 3.800 1.600 3.800H-1.600"/></g></g>
<g transform="translate(78 273.8)" fill="none" stroke="#4a5056" stroke-width="1.300" stroke-linecap="round" stroke-linejoin="round"><g transform="scale(.88)"><path d="M1.800 -4.800L4.600 -2.200L1.800 .4M4.400 -2.200H-1.600C-5.600 -2.200 -5.600 3.800 -1.600 3.800H1.600"/></g></g>
<g transform="translate(100 273.8)" fill="none" stroke="#dfe1e3" stroke-width="1.300" stroke-linecap="round" stroke-linejoin="round"><g transform="scale(.88)"><path d="M-4.600 -2.800H4.600M-2 -2.800V-4.400H2V-2.800M-3.600 -2.600L-3 4.600H3L3.600 -2.600M-1.200 -.4V2.600M1.200 -.4V2.600"/></g></g>
<g transform="translate(122.6 273.8)" fill="none" stroke="#dfe1e3" stroke-width="1.300" stroke-linecap="round" stroke-linejoin="round"><g transform="scale(.88)"><path d="M-3.400 -4.800L2.400 2.400M3.400 -4.800L-2.400 2.400"/><circle cx="-3.200" cy="3.400" r="1.600"/><circle cx="3.200" cy="3.400" r="1.600"/></g></g>
<g transform="translate(144.5 273.8)" fill="none" stroke="#dfe1e3" stroke-width="1.300" stroke-linecap="round" stroke-linejoin="round"><g transform="scale(.88)"><path d="M-4.600 -2.400V-4.400H3.400V-2.400M-.6 -4.400V4.400M-2.200 4.400H1"/><path d="M3.600 3H5.600V5Z" fill="#dfe1e3" stroke="none"/></g></g>
<g transform="translate(167.5 273.8)" fill="none" stroke="#dfe1e3" stroke-width="1.300" stroke-linecap="round" stroke-linejoin="round"><g transform="scale(.88)"><rect x="-4.400" y="-4" width="8" height="8" rx="1.300"/><path d="M4 3.400H6V5.400Z" fill="#dfe1e3" stroke="none"/></g></g>
<circle cx="173.200" cy="267.200" r="1.200" fill="#f0506a"/>
<g transform="translate(190.4 273.8)" fill="none" stroke="#dfe1e3" stroke-width="1.300" stroke-linecap="round" stroke-linejoin="round"><g transform="scale(.88)"><circle cx="0" cy="-1.800" r="2.900"/><circle cx="-2.300" cy="1.900" r="2.900"/><circle cx="2.300" cy="1.900" r="2.900"/></g></g>
<g transform="translate(212 273.8)" fill="none" stroke="#dfe1e3" stroke-width="1.300" stroke-linecap="round" stroke-linejoin="round"><g transform="scale(.88)"><path d="M3.200 -3.800A5 5 0 1 0 4.900 1"/><circle cx="-.4" cy=".4" r="1.700"/><path d="M1.200 -.6L3.600 -5.200"/></g></g>
<g transform="translate(234.5 273.8)" fill="none" stroke="#dfe1e3" stroke-width="1.300" stroke-linecap="round" stroke-linejoin="round"><g transform="scale(.88)"><circle cx="0" cy=".6" r="4.400"/><path d="M-1.400 -5.400H1.400M0 -1.800V.8L1.600 1.800"/></g></g>
<circle cx="286.500" cy="273.900" r="6.200" fill="#4fd8b0"/><path d="M282.500 270.400A5 5 0 0 1 290.500 270.400" stroke="#b8f8e4" stroke-width="1" fill="none" opacity=".8"/><rect x="282.700" y="271.900" width="7.600" height="4" rx="2" fill="#15302c"/><circle cx="284.700" cy="273.900" r=".9" fill="#4fd8b0"/><circle cx="288.300" cy="273.900" r=".9" fill="#4fd8b0"/>
<g transform="translate(308 273.8)" fill="none" stroke="#4fd8b0" stroke-width="1.300" stroke-linecap="round" stroke-linejoin="round"><g transform="scale(.88)"><rect x="-3.600" y="-2" width="7.200" height="4" rx=".8"/><path d="M-5.400 0H-3.800M3.800 0H5.400M0 -5.400V-3.800M0 3.800V5.400M-3.400 -4.400L-2.600 -3.400M3.400 -4.400L2.600 -3.400M-3.400 4.400L-2.600 3.400M3.400 4.400L2.600 3.400"/></g></g>
<g transform="translate(331.5 273.8)" fill="none" stroke="#4a5056" stroke-width="1.300" stroke-linecap="round" stroke-linejoin="round"><g transform="scale(.88)"><rect x="-5" y="-2.600" width="7.600" height="6.400" rx="1.200"/><path d="M2.800 -.6L5 -2V3L2.800 1.600"/><circle cx="-1.200" cy=".6" r="1.400"/><path d="M3.800 -4.800V-3.200M3 -4H4.600"/></g></g>
<g transform="translate(354 273.8)" fill="none" stroke="#dfe1e3" stroke-width="1.300" stroke-linecap="round" stroke-linejoin="round"><g transform="scale(.88)"><circle r="4.800"/><path d="M-1.200 -2.200L2.200 0L-1.200 2.200Z"/><path d="M-6 -2A6.400 6.400 0 0 0 -6 2" stroke-width=".7"/></g></g>
<g transform="translate(376 273.8)" fill="none" stroke="#dfe1e3" stroke-width="1.300" stroke-linecap="round" stroke-linejoin="round"><g transform="scale(.88)"><path d="M-3.800 -4.400H3.800V1.600L0 4.800L-3.800 1.600Z"/></g></g>
<g transform="translate(399 273.8)" fill="none" stroke="#dfe1e3" stroke-width="1.300" stroke-linecap="round" stroke-linejoin="round"><g transform="scale(.88)"><rect x="-1.700" y="-5" width="3.400" height="6.200" rx="1.700"/><path d="M-3.600 -.6C-3.600 4 3.600 4 3.600 -.6M0 2.900V4.800M-1.600 4.800H1.600"/></g></g>
<g transform="translate(421.5 273.8)" fill="none" stroke="#dfe1e3" stroke-width="1.300" stroke-linecap="round" stroke-linejoin="round"><g transform="scale(.88)"><path d="M-4.800 -3.800H2M-4.800 -1.200H-.4M-4.800 1.400H-1.400M-4.800 4H-2.400M1.400 3V-2L4.800 -2.800V2"/><circle cx=".4" cy="3.200" r="1.100"/><circle cx="3.800" cy="2.200" r="1.100"/></g></g>
<g transform="translate(444 273.8)" fill="none" stroke="#dfe1e3" stroke-width="1.300" stroke-linecap="round" stroke-linejoin="round"><g transform="scale(.88)"><path d="M-.6 4H-3.600Q-4.800 4 -4.800 2.800V-3Q-4.800 -4.200 -3.600 -4.200H2Q3.200 -4.200 3.200 -3V-1.400M-2.600 -4V4"/><path d="M-.4 2.400C1 .2 4 .2 5.400 2.400C4 4.600 1 4.600 -.4 2.400Z"/><circle cx="2.500" cy="2.400" r=".8"/></g></g>
<g transform="translate(466.5 273.8)" fill="none" stroke="#dfe1e3" stroke-width="1.300" stroke-linecap="round" stroke-linejoin="round"><g transform="scale(.88)"><rect x="-5" y="-4.400" width="10" height="8.800" rx="1.600"/><path d="M-2.800 0H2.800M-1.600 -1.400L-3 0L-1.600 1.400M1.600 -1.400L3 0L1.600 1.400"/></g></g>
<g transform="translate(489 273.8)" fill="none" stroke="#dfe1e3" stroke-width="1.300" stroke-linecap="round" stroke-linejoin="round"><g transform="scale(.88)"><circle r="4.600"/><path d="M-2.200 0H2.200"/></g></g>
<rect x="500" y="273.300" width="56" height="1.200" rx=".6" fill="#3a4046"/><rect x="500" y="273.200" width="35.500" height="1.400" rx=".7" fill="#dfe1e3"/><circle cx="535.500" cy="273.900" r="2.700" fill="#5a6066" stroke="#e8eaec" stroke-width="1.100"/>
<g transform="translate(568 273.8)" fill="none" stroke="#dfe1e3" stroke-width="1.300" stroke-linecap="round" stroke-linejoin="round"><g transform="scale(.88)"><circle r="4.600"/><path d="M-2.200 0H2.200M0 -2.200V2.200"/></g></g>
<g fill="#555b61"><rect x="596" y="267" width="3.200" height="1.700" rx=".3"/><rect x="596" y="270.2" width="3.200" height="1.700" rx=".3"/><rect x="596" y="273.4" width="3.200" height="1.700" rx=".3"/><rect x="596" y="276.6" width="3.200" height="1.700" rx=".3"/><rect x="596" y="279.8" width="3.200" height="1.700" rx=".3"/><rect x="600.8" y="267" width="3.200" height="1.700" rx=".3"/><rect x="600.8" y="270.2" width="3.200" height="1.700" rx=".3"/><rect x="600.8" y="273.4" width="3.200" height="1.700" rx=".3"/><rect x="600.8" y="276.6" width="3.200" height="1.700" rx=".3"/><rect x="600.8" y="279.8" width="3.200" height="1.700" rx=".3"/></g>
<path d="M613.400 272.800H617L615.200 275.400Z" fill="#c8cbce"/>
<g transform="translate(17.9 296)" fill="none" stroke="#d0d3d6" stroke-width="1.250" stroke-linecap="round" stroke-linejoin="round"><path d="M-1.400 1.400L-2.400 2.400C-4.400 4.400 -6.400 2 -4.600 .2L-2.600 -1.800C-1.600 -2.800 -.4 -2.600 .2 -1.800M1.400 -1.400L2.400 -2.400C4.400 -4.400 6.400 -2 4.600 -.2L2.600 1.800C1.600 2.800 .4 2.600 -.2 1.800M-2.800 -4.600L2.800 4.600" transform="scale(.92)"/></g>
<g transform="translate(37.6 296.5)" fill="none" stroke="#d0d3d6" stroke-width="1.250" stroke-linecap="round" stroke-linejoin="round"><rect x="-5.800" y="-2.900" width="6.400" height="5.800" rx="1.500"/><rect x="-.6" y="-2.900" width="6.400" height="5.800" rx="1.500"/><path d="M-2.200 0H2.200"/></g>
<g transform="translate(57.5 297)" fill="none" stroke="#2d6458" stroke-width="1.250" stroke-linecap="round" stroke-linejoin="round"><rect x="-4.400" y="-3.700" width="8.800" height="3" rx="1.200"/><rect x="-5.400" y=".7" width="10.800" height="3" rx="1.200"/><path d="M0 -.7V.7"/></g>
<path d="M70.50 298.500V303.800M76.76 301.200V303.800M83.02 301.200V303.800M89.28 301.200V303.800M95.54 301.200V303.800M101.80 301.200V303.800M108.06 298.500V303.800M114.32 301.200V303.800M120.58 301.200V303.800M126.84 301.200V303.800M133.10 301.200V303.800M139.36 301.200V303.800M145.62 298.500V303.800M151.88 301.200V303.800M158.14 301.200V303.800M164.40 301.200V303.800M170.66 301.200V303.800M176.92 301.200V303.800M183.18 298.500V303.800M189.44 301.200V303.800M195.70 301.200V303.800M201.96 301.200V303.800M208.22 301.200V303.800M214.48 301.200V303.800M220.74 298.500V303.800M227.00 301.200V303.800M233.26 301.200V303.800M239.52 301.200V303.800M245.78 301.200V303.800M252.04 301.200V303.800M258.30 298.500V303.800M264.56 301.200V303.800M270.82 301.200V303.800M277.08 301.200V303.800M283.34 301.200V303.800M289.60 301.200V303.800M295.86 298.500V303.800M302.12 301.200V303.800M308.38 301.200V303.800M314.64 301.200V303.800M320.90 301.200V303.800M327.16 301.200V303.800M333.42 298.500V303.800M339.68 301.200V303.800M345.94 301.200V303.800M352.20 301.200V303.800M358.46 301.200V303.800M364.72 301.200V303.800M370.98 298.500V303.800M377.24 301.200V303.800M383.50 301.200V303.800M389.76 301.200V303.800M396.02 301.200V303.800M402.28 301.200V303.800M408.54 298.500V303.800M414.80 301.200V303.800M421.06 301.200V303.800M427.32 301.200V303.800M433.58 301.200V303.800M439.84 301.200V303.800M446.10 298.500V303.800M452.36 301.200V303.800M458.62 301.200V303.800M464.88 301.200V303.800M471.14 301.200V303.800M477.40 301.200V303.800M483.66 298.500V303.800M489.92 301.200V303.800M496.18 301.200V303.800M502.44 301.200V303.800M508.70 301.200V303.800M514.96 301.200V303.800M521.22 298.500V303.800M527.48 301.200V303.800M533.74 301.200V303.800M540.00 301.200V303.800M546.26 301.200V303.800M552.52 301.200V303.800M558.78 298.500V303.800M565.04 301.200V303.800M571.30 301.200V303.800M577.56 301.200V303.800M583.82 301.200V303.800M590.08 301.200V303.800M596.34 298.500V303.800M602.60 301.200V303.800M608.86 301.200V303.800M615.12 301.200V303.800M621.38 301.200V303.800" stroke="#767c82" stroke-width=".8" fill="none"/>
<rect x="70" y="304.700" width="123.500" height="1.300" fill="#e4504f"/><rect x="487" y="304.700" width="125" height="1.300" fill="#e4504f"/>
<g transform="translate(15 385.3)" fill="none" stroke="#dfe1e3" stroke-width=".9" stroke-linecap="round" stroke-linejoin="round"><g transform="scale(.82)"><rect x="-3.400" y="-1.400" width="6.800" height="5" rx=".8"/><path d="M-3.400 -1.400V-3.600Q-3.400 -4.600 -2.400 -4.600H-1.200"/></g></g>
<g transform="translate(30 385.3)" fill="none" stroke="#dfe1e3" stroke-width=".9" stroke-linecap="round" stroke-linejoin="round"><g transform="scale(.82)"><path d="M-4 -1.400H-2.200L.2 -3.800V3.800L-2.200 1.400H-4Z"/><path d="M2 -2C3 -1 3 1 2 2M3.400 -3.200C5 -1.400 5 1.400 3.400 3.200"/></g></g>
<g transform="translate(45 385.3)" fill="none" stroke="#dfe1e3" stroke-width=".9" stroke-linecap="round" stroke-linejoin="round"><g transform="scale(.82)"><path d="M-5 0C-2.600 -3.800 2.600 -3.800 5 0C2.600 3.800 -2.600 3.800 -5 0Z"/><circle r="1.500" fill="#dfe1e3"/></g></g>
<g transform="translate(60 385.3)" fill="none" stroke="#dfe1e3" stroke-width=".9" stroke-linecap="round" stroke-linejoin="round"><g transform="scale(.82)"><path d="M-1.200 -.8L3.800 4.200M-3.400 -4V-2.600M-4.600 -1.400H-3.200M-1 -4.400L-1.600 -3.200M-4.400 1L-3.200 .4M.8 -2.800L-.4 -1.600L-1.800 -.2"/></g></g>
<clipPath id="a1c"><rect x="5" y="400" width="65" height="8.800"/></clipPath>
<path d="M37 411.400L37.800 413.800L40.200 414.600L37.800 415.400L37 417.800L36.200 415.400L33.800 414.600L36.200 413.800Z" fill="#e8eaec"/>
<clipPath id="clipc"><rect x="70.900" y="360.100" width="540.200" height="38.700" rx="2.400"/></clipPath>
<g clip-path="url(#clipc)"><g filter="url(#b04)"><rect x="70.0" y="360.0" width="49.0" height="25.0" fill="#e84a7e"/><ellipse cx="92.8" cy="373.8" rx="1.6" ry="1.6" fill="#f0709c"/><ellipse cx="114.5" cy="371.8" rx="1.6" ry="1.6" fill="#f0709c"/><ellipse cx="95.4" cy="374.3" rx="1.6" ry="1.6" fill="#f0709c"/><ellipse cx="80.5" cy="372.8" rx="1.6" ry="1.6" fill="#f0709c"/><ellipse cx="101.0" cy="378.7" rx="1.6" ry="1.6" fill="#f0709c"/><ellipse cx="76.3" cy="368.4" rx="1.6" ry="1.6" fill="#f0709c"/><ellipse cx="76.2" cy="379.0" rx="1.6" ry="1.6" fill="#f0709c"/><ellipse cx="103.9" cy="362.9" rx="1.6" ry="1.6" fill="#f0709c"/><ellipse cx="117.2" cy="382.3" rx="1.6" ry="1.6" fill="#f0709c"/><ellipse cx="102.1" cy="374.9" rx="1.6" ry="1.6" fill="#f0709c"/><ellipse cx="79.2" cy="362.3" rx="1.6" ry="1.6" fill="#f0709c"/><ellipse cx="96.3" cy="363.3" rx="1.6" ry="1.6" fill="#f0709c"/><ellipse cx="80.7" cy="367.1" rx="1.6" ry="1.6" fill="#f0709c"/><ellipse cx="73.4" cy="371.7" rx="1.6" ry="1.6" fill="#f0709c"/><rect x="102.0" y="360.0" width="5.0" height="2.5" fill="#40c8a0"/><rect x="110.0" y="360.0" width="4.0" height="3.0" fill="#f0a030"/><ellipse cx="96.0" cy="361.0" rx="2.5" ry="2.0" fill="#f8d040"/><ellipse cx="108.5" cy="373.9" rx="3.4" ry="3.2" fill="#c07c34"/><ellipse cx="105.8" cy="371.1" rx="1.4" ry="1.4" fill="#c07c34"/><ellipse cx="111.2" cy="371.1" rx="1.4" ry="1.4" fill="#c07c34"/><ellipse cx="108.5" cy="380.1" rx="4.2" ry="4.7" fill="#c07c34"/><ellipse cx="108.5" cy="374.7" rx="1.5" ry="1.2" fill="#e8c088"/><rect x="92.0" y="381.0" width="10.0" height="2.5" fill="#f0c040"/><rect x="118.5" y="360.0" width="43.5" height="25.0" fill="#ea4c80"/><ellipse cx="129.5" cy="370.0" rx="10.5" ry="9.5" fill="#f6dcdc"/><rect x="118.5" y="360.0" width="22.0" height="2.5" fill="#f08ab0"/><rect x="140.5" y="360.0" width="10.0" height="3.0" fill="#40c8a0"/><ellipse cx="123.5" cy="374.8" rx="4.1" ry="5.8" fill="#f0d040"/><ellipse cx="123.5" cy="367.9" rx="2.9" ry="3.1" fill="#d8a07c"/><ellipse cx="123.5" cy="366.0" rx="3.2" ry="2.3" fill="#241810"/><ellipse cx="130.0" cy="373.2" rx="4.5" ry="6.2" fill="#e03838"/><ellipse cx="130.0" cy="365.8" rx="3.1" ry="3.4" fill="#d8a07c"/><ellipse cx="130.0" cy="363.8" rx="3.5" ry="2.5" fill="#1a1210"/><ellipse cx="136.5" cy="374.8" rx="4.1" ry="5.8" fill="#3878d0"/><ellipse cx="136.5" cy="367.9" rx="2.9" ry="3.1" fill="#d8a07c"/><ellipse cx="136.5" cy="366.0" rx="3.2" ry="2.3" fill="#2a1a12"/><rect x="118.5" y="380.5" width="22.0" height="4.0" fill="#e8709c"/><rect x="149.5" y="362.0" width="6.0" height="13.0" fill="#48a8e0"/><ellipse cx="146.5" cy="372.6" rx="3.7" ry="3.4" fill="#c07c34"/><ellipse cx="143.5" cy="369.6" rx="1.5" ry="1.5" fill="#c07c34"/><ellipse cx="149.5" cy="369.6" rx="1.5" ry="1.5" fill="#c07c34"/><ellipse cx="146.5" cy="379.4" rx="4.6" ry="5.2" fill="#c07c34"/><ellipse cx="146.5" cy="373.5" rx="1.6" ry="1.3" fill="#e8c088"/><rect x="155.5" y="366.0" width="5.0" height="9.0" fill="#f8d8d0"/><ellipse cx="157.5" cy="378.0" rx="3.0" ry="3.0" fill="#f8d040"/><rect x="140.5" y="381.0" width="21.5" height="3.5" fill="#d83468"/><rect x="162.0" y="360.0" width="43.5" height="25.0" fill="#ea4c80"/><ellipse cx="173.0" cy="370.0" rx="10.5" ry="9.5" fill="#f6dcdc"/><rect x="162.0" y="360.0" width="22.0" height="2.5" fill="#f08ab0"/><rect x="184.0" y="360.0" width="10.0" height="3.0" fill="#40c8a0"/><ellipse cx="167.0" cy="374.8" rx="4.1" ry="5.8" fill="#f0d040"/><ellipse cx="167.0" cy="367.9" rx="2.9" ry="3.1" fill="#d8a07c"/><ellipse cx="167.0" cy="366.0" rx="3.2" ry="2.3" fill="#241810"/><ellipse cx="173.5" cy="373.2" rx="4.5" ry="6.2" fill="#e03838"/><ellipse cx="173.5" cy="365.8" rx="3.1" ry="3.4" fill="#d8a07c"/><ellipse cx="173.5" cy="363.8" rx="3.5" ry="2.5" fill="#1a1210"/><ellipse cx="180.0" cy="374.8" rx="4.1" ry="5.8" fill="#3878d0"/><ellipse cx="180.0" cy="367.9" rx="2.9" ry="3.1" fill="#d8a07c"/><ellipse cx="180.0" cy="366.0" rx="3.2" ry="2.3" fill="#2a1a12"/><rect x="162.0" y="380.5" width="22.0" height="4.0" fill="#e8709c"/><rect x="193.0" y="362.0" width="6.0" height="13.0" fill="#48a8e0"/><ellipse cx="190.0" cy="372.6" rx="3.7" ry="3.4" fill="#c07c34"/><ellipse cx="187.0" cy="369.6" rx="1.5" ry="1.5" fill="#c07c34"/><ellipse cx="193.0" cy="369.6" rx="1.5" ry="1.5" fill="#c07c34"/><ellipse cx="190.0" cy="379.4" rx="4.6" ry="5.2" fill="#c07c34"/><ellipse cx="190.0" cy="373.5" rx="1.6" ry="1.3" fill="#e8c088"/><rect x="199.0" y="366.0" width="5.0" height="9.0" fill="#f8d8d0"/><ellipse cx="201.0" cy="378.0" rx="3.0" ry="3.0" fill="#f8d040"/><rect x="184.0" y="381.0" width="21.5" height="3.5" fill="#d83468"/><rect x="205.5" y="360.0" width="44.0" height="25.0" fill="#f27a14"/><rect x="209.5" y="361.0" width="39.0" height="20.0" fill="#e0842c"/><rect x="209.5" y="360.0" width="39.0" height="4.0" fill="#b85a18"/><ellipse cx="214.5" cy="374.2" rx="4.5" ry="6.2" fill="#e8e4e0"/><ellipse cx="214.5" cy="366.8" rx="3.1" ry="3.4" fill="#d8a07c"/><ellipse cx="214.5" cy="364.8" rx="3.5" ry="2.5" fill="#1c120e"/><ellipse cx="221.5" cy="373.5" rx="4.7" ry="6.5" fill="#d83030"/><ellipse cx="221.5" cy="365.7" rx="3.2" ry="3.5" fill="#d8a07c"/><ellipse cx="221.5" cy="363.6" rx="3.6" ry="2.6" fill="#2a1810"/><ellipse cx="228.5" cy="374.5" rx="4.3" ry="6.0" fill="#f0ece8"/><ellipse cx="228.5" cy="367.3" rx="3.0" ry="3.2" fill="#d8a07c"/><ellipse cx="228.5" cy="365.4" rx="3.4" ry="2.4" fill="#1a100c"/><ellipse cx="211.5" cy="376.0" rx="2.5" ry="3.0" fill="#f8d848"/><ellipse cx="233.5" cy="377.0" rx="2.0" ry="2.5" fill="#e03838"/><ellipse cx="238.5" cy="367.9" rx="4.3" ry="4.1" fill="#a8621c"/><ellipse cx="235.0" cy="364.4" rx="1.8" ry="1.8" fill="#a8621c"/><ellipse cx="242.0" cy="364.4" rx="1.8" ry="1.8" fill="#a8621c"/><ellipse cx="238.5" cy="376.1" rx="5.4" ry="6.1" fill="#a8621c"/><ellipse cx="238.5" cy="369.0" rx="1.9" ry="1.5" fill="#e8c088"/><rect x="209.5" y="379.0" width="39.0" height="3.5" fill="#f0d048"/><rect x="209.5" y="382.0" width="39.0" height="2.2" fill="#f28018"/><ellipse cx="217.5" cy="380.0" rx="3.0" ry="1.3" fill="#f8f0e0"/><ellipse cx="231.5" cy="380.0" rx="2.5" ry="1.2" fill="#e84040"/><rect x="249.5" y="360.0" width="44.0" height="25.0" fill="#f27a14"/><rect x="253.5" y="361.0" width="39.0" height="20.0" fill="#e0842c"/><rect x="253.5" y="360.0" width="39.0" height="4.0" fill="#b85a18"/><ellipse cx="258.5" cy="374.2" rx="4.5" ry="6.2" fill="#e8e4e0"/><ellipse cx="258.5" cy="366.8" rx="3.1" ry="3.4" fill="#d8a07c"/><ellipse cx="258.5" cy="364.8" rx="3.5" ry="2.5" fill="#1c120e"/><ellipse cx="265.5" cy="373.5" rx="4.7" ry="6.5" fill="#d83030"/><ellipse cx="265.5" cy="365.7" rx="3.2" ry="3.5" fill="#d8a07c"/><ellipse cx="265.5" cy="363.6" rx="3.6" ry="2.6" fill="#2a1810"/><ellipse cx="272.5" cy="374.5" rx="4.3" ry="6.0" fill="#f0ece8"/><ellipse cx="272.5" cy="367.3" rx="3.0" ry="3.2" fill="#d8a07c"/><ellipse cx="272.5" cy="365.4" rx="3.4" ry="2.4" fill="#1a100c"/><ellipse cx="255.5" cy="376.0" rx="2.5" ry="3.0" fill="#f8d848"/><ellipse cx="277.5" cy="377.0" rx="2.0" ry="2.5" fill="#e03838"/><ellipse cx="282.5" cy="367.9" rx="4.3" ry="4.1" fill="#a8621c"/><ellipse cx="279.0" cy="364.4" rx="1.8" ry="1.8" fill="#a8621c"/><ellipse cx="286.0" cy="364.4" rx="1.8" ry="1.8" fill="#a8621c"/><ellipse cx="282.5" cy="376.1" rx="5.4" ry="6.1" fill="#a8621c"/><ellipse cx="282.5" cy="369.0" rx="1.9" ry="1.5" fill="#e8c088"/><rect x="253.5" y="379.0" width="39.0" height="3.5" fill="#f0d048"/><rect x="253.5" y="382.0" width="39.0" height="2.2" fill="#f28018"/><ellipse cx="261.5" cy="380.0" rx="3.0" ry="1.3" fill="#f8f0e0"/><ellipse cx="275.5" cy="380.0" rx="2.5" ry="1.2" fill="#e84040"/><rect x="293.5" y="360.0" width="44.0" height="25.0" fill="#f27a14"/><rect x="297.5" y="361.0" width="39.0" height="20.0" fill="#e0842c"/><rect x="297.5" y="360.0" width="39.0" height="4.0" fill="#b85a18"/><ellipse cx="302.5" cy="374.2" rx="4.5" ry="6.2" fill="#e8e4e0"/><ellipse cx="302.5" cy="366.8" rx="3.1" ry="3.4" fill="#d8a07c"/><ellipse cx="302.5" cy="364.8" rx="3.5" ry="2.5" fill="#1c120e"/><ellipse cx="309.5" cy="373.5" rx="4.7" ry="6.5" fill="#d83030"/><ellipse cx="309.5" cy="365.7" rx="3.2" ry="3.5" fill="#d8a07c"/><ellipse cx="309.5" cy="363.6" rx="3.6" ry="2.6" fill="#2a1810"/><ellipse cx="316.5" cy="374.5" rx="4.3" ry="6.0" fill="#f0ece8"/><ellipse cx="316.5" cy="367.3" rx="3.0" ry="3.2" fill="#d8a07c"/><ellipse cx="316.5" cy="365.4" rx="3.4" ry="2.4" fill="#1a100c"/><ellipse cx="299.5" cy="376.0" rx="2.5" ry="3.0" fill="#f8d848"/><ellipse cx="321.5" cy="377.0" rx="2.0" ry="2.5" fill="#e03838"/><ellipse cx="326.5" cy="367.9" rx="4.3" ry="4.1" fill="#a8621c"/><ellipse cx="323.0" cy="364.4" rx="1.8" ry="1.8" fill="#a8621c"/><ellipse cx="330.0" cy="364.4" rx="1.8" ry="1.8" fill="#a8621c"/><ellipse cx="326.5" cy="376.1" rx="5.4" ry="6.1" fill="#a8621c"/><ellipse cx="326.5" cy="369.0" rx="1.9" ry="1.5" fill="#e8c088"/><rect x="297.5" y="379.0" width="39.0" height="3.5" fill="#f0d048"/><rect x="297.5" y="382.0" width="39.0" height="2.2" fill="#f28018"/><ellipse cx="305.5" cy="380.0" rx="3.0" ry="1.3" fill="#f8f0e0"/><ellipse cx="319.5" cy="380.0" rx="2.5" ry="1.2" fill="#e84040"/><rect x="337.5" y="360.0" width="44.0" height="25.0" fill="#f27a14"/><rect x="341.5" y="361.0" width="39.0" height="20.0" fill="#e0842c"/><rect x="341.5" y="360.0" width="39.0" height="4.0" fill="#b85a18"/><ellipse cx="346.5" cy="374.2" rx="4.5" ry="6.2" fill="#e8e4e0"/><ellipse cx="346.5" cy="366.8" rx="3.1" ry="3.4" fill="#d8a07c"/><ellipse cx="346.5" cy="364.8" rx="3.5" ry="2.5" fill="#1c120e"/><ellipse cx="353.5" cy="373.5" rx="4.7" ry="6.5" fill="#d83030"/><ellipse cx="353.5" cy="365.7" rx="3.2" ry="3.5" fill="#d8a07c"/><ellipse cx="353.5" cy="363.6" rx="3.6" ry="2.6" fill="#2a1810"/><ellipse cx="360.5" cy="374.5" rx="4.3" ry="6.0" fill="#f0ece8"/><ellipse cx="360.5" cy="367.3" rx="3.0" ry="3.2" fill="#d8a07c"/><ellipse cx="360.5" cy="365.4" rx="3.4" ry="2.4" fill="#1a100c"/><ellipse cx="343.5" cy="376.0" rx="2.5" ry="3.0" fill="#f8d848"/><ellipse cx="365.5" cy="377.0" rx="2.0" ry="2.5" fill="#e03838"/><ellipse cx="370.5" cy="367.9" rx="4.3" ry="4.1" fill="#a8621c"/><ellipse cx="367.0" cy="364.4" rx="1.8" ry="1.8" fill="#a8621c"/><ellipse cx="374.0" cy="364.4" rx="1.8" ry="1.8" fill="#a8621c"/><ellipse cx="370.5" cy="376.1" rx="5.4" ry="6.1" fill="#a8621c"/><ellipse cx="370.5" cy="369.0" rx="1.9" ry="1.5" fill="#e8c088"/><rect x="341.5" y="379.0" width="39.0" height="3.5" fill="#f0d048"/><rect x="341.5" y="382.0" width="39.0" height="2.2" fill="#f28018"/><ellipse cx="349.5" cy="380.0" rx="3.0" ry="1.3" fill="#f8f0e0"/><ellipse cx="363.5" cy="380.0" rx="2.5" ry="1.2" fill="#e84040"/><rect x="381.5" y="360.0" width="2.5" height="25.0" fill="#f27a14"/><rect x="385.5" y="361.0" width="-2.5" height="20.0" fill="#e0842c"/><rect x="385.5" y="360.0" width="-2.5" height="4.0" fill="#b85a18"/><ellipse cx="390.5" cy="374.2" rx="4.5" ry="6.2" fill="#e8e4e0"/><ellipse cx="390.5" cy="366.8" rx="3.1" ry="3.4" fill="#d8a07c"/><ellipse cx="390.5" cy="364.8" rx="3.5" ry="2.5" fill="#1c120e"/><ellipse cx="397.5" cy="373.5" rx="4.7" ry="6.5" fill="#d83030"/><ellipse cx="397.5" cy="365.7" rx="3.2" ry="3.5" fill="#d8a07c"/><ellipse cx="397.5" cy="363.6" rx="3.6" ry="2.6" fill="#2a1810"/><ellipse cx="404.5" cy="374.5" rx="4.3" ry="6.0" fill="#f0ece8"/><ellipse cx="404.5" cy="367.3" rx="3.0" ry="3.2" fill="#d8a07c"/><ellipse cx="404.5" cy="365.4" rx="3.4" ry="2.4" fill="#1a100c"/><ellipse cx="387.5" cy="376.0" rx="2.5" ry="3.0" fill="#f8d848"/><ellipse cx="409.5" cy="377.0" rx="2.0" ry="2.5" fill="#e03838"/><ellipse cx="414.5" cy="367.9" rx="4.3" ry="4.1" fill="#a8621c"/><ellipse cx="411.0" cy="364.4" rx="1.8" ry="1.8" fill="#a8621c"/><ellipse cx="418.0" cy="364.4" rx="1.8" ry="1.8" fill="#a8621c"/><ellipse cx="414.5" cy="376.1" rx="5.4" ry="6.1" fill="#a8621c"/><ellipse cx="414.5" cy="369.0" rx="1.9" ry="1.5" fill="#e8c088"/><rect x="385.5" y="379.0" width="-2.5" height="3.5" fill="#f0d048"/><rect x="385.5" y="382.0" width="-2.5" height="2.2" fill="#f28018"/><ellipse cx="393.5" cy="380.0" rx="3.0" ry="1.3" fill="#f8f0e0"/><ellipse cx="407.5" cy="380.0" rx="2.5" ry="1.2" fill="#e84040"/><rect x="384.0" y="360.0" width="136.0" height="25.0" fill="#2e3c16"/><rect x="384.0" y="374.0" width="136.0" height="10.2" fill="#55702c"/><ellipse cx="444.2" cy="365.2" rx="1.4" ry="1.8" fill="#e8c838"/><ellipse cx="454.5" cy="364.2" rx="1.4" ry="1.8" fill="#e8c838"/><ellipse cx="452.0" cy="364.3" rx="1.4" ry="1.8" fill="#e8c838"/><ellipse cx="446.4" cy="362.4" rx="1.4" ry="1.8" fill="#e8c838"/><ellipse cx="517.7" cy="366.0" rx="1.4" ry="1.8" fill="#e8c838"/><ellipse cx="496.9" cy="364.5" rx="1.4" ry="1.8" fill="#e8c838"/><ellipse cx="427.6" cy="362.1" rx="1.4" ry="1.8" fill="#e8c838"/><ellipse cx="424.2" cy="361.4" rx="1.4" ry="1.8" fill="#e8c838"/><ellipse cx="487.2" cy="363.0" rx="1.4" ry="1.8" fill="#e8c838"/><ellipse cx="497.7" cy="362.9" rx="1.4" ry="1.8" fill="#e8c838"/><ellipse cx="512.5" cy="365.2" rx="1.4" ry="1.8" fill="#e8c838"/><ellipse cx="386.1" cy="362.0" rx="1.4" ry="1.8" fill="#e8c838"/><ellipse cx="506.2" cy="363.3" rx="1.4" ry="1.8" fill="#e8c838"/><ellipse cx="515.4" cy="363.0" rx="1.4" ry="1.8" fill="#e8c838"/><ellipse cx="395.6" cy="364.1" rx="1.4" ry="1.8" fill="#e8c838"/><ellipse cx="488.8" cy="362.3" rx="1.4" ry="1.8" fill="#e8c838"/><ellipse cx="399.3" cy="375.1" rx="3.8" ry="5.2" fill="#c8d0d8"/><ellipse cx="399.3" cy="368.8" rx="2.6" ry="2.8" fill="#d8a07c"/><ellipse cx="399.3" cy="367.1" rx="2.9" ry="2.1" fill="#2a2018"/><ellipse cx="486.5" cy="374.5" rx="3.8" ry="5.2" fill="#d8dce0"/><ellipse cx="486.5" cy="368.2" rx="2.6" ry="2.8" fill="#d8a07c"/><ellipse cx="486.5" cy="366.6" rx="2.9" ry="2.1" fill="#2a2018"/><ellipse cx="479.9" cy="374.3" rx="3.8" ry="5.2" fill="#c8d0d8"/><ellipse cx="479.9" cy="368.0" rx="2.6" ry="2.8" fill="#d8a07c"/><ellipse cx="479.9" cy="366.3" rx="2.9" ry="2.1" fill="#2a2018"/><ellipse cx="491.6" cy="374.7" rx="3.8" ry="5.2" fill="#d8dce0"/><ellipse cx="491.6" cy="368.4" rx="2.6" ry="2.8" fill="#d8a07c"/><ellipse cx="491.6" cy="366.7" rx="2.9" ry="2.1" fill="#2a2018"/><ellipse cx="446.2" cy="374.7" rx="3.8" ry="5.2" fill="#d8dce0"/><ellipse cx="446.2" cy="368.4" rx="2.6" ry="2.8" fill="#d8a07c"/><ellipse cx="446.2" cy="366.7" rx="2.9" ry="2.1" fill="#2a2018"/><ellipse cx="442.5" cy="375.2" rx="3.8" ry="5.2" fill="#c8d0d8"/><ellipse cx="442.5" cy="368.9" rx="2.6" ry="2.8" fill="#d8a07c"/><ellipse cx="442.5" cy="367.2" rx="2.9" ry="2.1" fill="#2a2018"/><ellipse cx="442.7" cy="374.8" rx="3.8" ry="5.2" fill="#f0f0f0"/><ellipse cx="442.7" cy="368.5" rx="2.6" ry="2.8" fill="#d8a07c"/><ellipse cx="442.7" cy="366.8" rx="2.9" ry="2.1" fill="#2a2018"/><ellipse cx="500.4" cy="376.7" rx="3.8" ry="5.2" fill="#f0f0f0"/><ellipse cx="500.4" cy="370.4" rx="2.6" ry="2.8" fill="#d8a07c"/><ellipse cx="500.4" cy="368.7" rx="2.9" ry="2.1" fill="#2a2018"/><ellipse cx="517.7" cy="374.3" rx="3.8" ry="5.2" fill="#d8dce0"/><ellipse cx="517.7" cy="368.0" rx="2.6" ry="2.8" fill="#d8a07c"/><ellipse cx="517.7" cy="366.3" rx="2.9" ry="2.1" fill="#2a2018"/><ellipse cx="439.3" cy="376.4" rx="3.8" ry="5.2" fill="#e8e8e8"/><ellipse cx="439.3" cy="370.1" rx="2.6" ry="2.8" fill="#d8a07c"/><ellipse cx="439.3" cy="368.4" rx="2.9" ry="2.1" fill="#2a2018"/><ellipse cx="393.5" cy="374.6" rx="3.8" ry="5.2" fill="#c8d0d8"/><ellipse cx="393.5" cy="368.3" rx="2.6" ry="2.8" fill="#d8a07c"/><ellipse cx="393.5" cy="366.6" rx="2.9" ry="2.1" fill="#2a2018"/><ellipse cx="421.6" cy="376.2" rx="3.8" ry="5.2" fill="#f0f0f0"/><ellipse cx="421.6" cy="369.9" rx="2.6" ry="2.8" fill="#d8a07c"/><ellipse cx="421.6" cy="368.2" rx="2.9" ry="2.1" fill="#2a2018"/><rect x="504.0" y="372.0" width="11.0" height="6.0" fill="#2c5cd8"/><rect x="506.0" y="373.5" width="7.0" height="1.2" fill="#e8ecf8"/><rect x="384.0" y="360.0" width="1.2" height="25.0" fill="#18200c"/><rect x="452.0" y="360.0" width="1.2" height="25.0" fill="#18200c"/><rect x="520.0" y="360.0" width="45.0" height="25.0" fill="#3cd6a6"/><rect x="521.5" y="361.0" width="39.0" height="20.5" fill="#e8d8d8"/><rect x="521.5" y="361.0" width="39.0" height="6.0" fill="#a8c8b8"/><ellipse cx="526.0" cy="374.2" rx="4.5" ry="6.2" fill="#f4f0f0"/><ellipse cx="526.0" cy="366.8" rx="3.1" ry="3.4" fill="#d8a07c"/><ellipse cx="526.0" cy="364.8" rx="3.5" ry="2.5" fill="#18100c"/><ellipse cx="533.0" cy="375.2" rx="4.1" ry="5.8" fill="#f088a8"/><ellipse cx="533.0" cy="368.4" rx="2.9" ry="3.1" fill="#d8a07c"/><ellipse cx="533.0" cy="366.5" rx="3.2" ry="2.3" fill="#20140e"/><ellipse cx="540.0" cy="373.8" rx="4.5" ry="6.2" fill="#f8f4f0"/><ellipse cx="540.0" cy="366.2" rx="3.1" ry="3.4" fill="#d8a07c"/><ellipse cx="540.0" cy="364.2" rx="3.5" ry="2.5" fill="#1a120c"/><ellipse cx="547.0" cy="374.5" rx="4.0" ry="5.5" fill="#f06890"/><ellipse cx="547.0" cy="367.9" rx="2.8" ry="3.0" fill="#d8a07c"/><ellipse cx="547.0" cy="366.1" rx="3.1" ry="2.2" fill="#2a1a10"/><ellipse cx="553.5" cy="373.8" rx="4.1" ry="5.8" fill="#f8e060"/><ellipse cx="553.5" cy="366.9" rx="2.9" ry="3.1" fill="#d8a07c"/><ellipse cx="553.5" cy="365.0" rx="3.2" ry="2.3" fill="#1c120c"/><ellipse cx="556.0" cy="366.0" rx="3.5" ry="3.5" fill="#f05080"/><ellipse cx="550.0" cy="363.0" rx="2.5" ry="2.5" fill="#f8d040"/><rect x="521.5" y="379.0" width="39.0" height="2.5" fill="#f0a0c0"/><rect x="565.0" y="360.0" width="46.5" height="25.0" fill="#3cd6a6"/><rect x="566.5" y="361.0" width="40.5" height="20.5" fill="#e8d8d8"/><rect x="566.5" y="361.0" width="40.5" height="6.0" fill="#a8c8b8"/><ellipse cx="571.0" cy="374.2" rx="4.5" ry="6.2" fill="#f4f0f0"/><ellipse cx="571.0" cy="366.8" rx="3.1" ry="3.4" fill="#d8a07c"/><ellipse cx="571.0" cy="364.8" rx="3.5" ry="2.5" fill="#18100c"/><ellipse cx="578.0" cy="375.2" rx="4.1" ry="5.8" fill="#f088a8"/><ellipse cx="578.0" cy="368.4" rx="2.9" ry="3.1" fill="#d8a07c"/><ellipse cx="578.0" cy="366.5" rx="3.2" ry="2.3" fill="#20140e"/><ellipse cx="585.0" cy="373.8" rx="4.5" ry="6.2" fill="#f8f4f0"/><ellipse cx="585.0" cy="366.2" rx="3.1" ry="3.4" fill="#d8a07c"/><ellipse cx="585.0" cy="364.2" rx="3.5" ry="2.5" fill="#1a120c"/><ellipse cx="592.0" cy="374.5" rx="4.0" ry="5.5" fill="#f06890"/><ellipse cx="592.0" cy="367.9" rx="2.8" ry="3.0" fill="#d8a07c"/><ellipse cx="592.0" cy="366.1" rx="3.1" ry="2.2" fill="#2a1a10"/><ellipse cx="598.5" cy="373.8" rx="4.1" ry="5.8" fill="#f8e060"/><ellipse cx="598.5" cy="366.9" rx="2.9" ry="3.1" fill="#d8a07c"/><ellipse cx="598.5" cy="365.0" rx="3.2" ry="2.3" fill="#1c120c"/><ellipse cx="601.0" cy="366.0" rx="3.5" ry="3.5" fill="#f05080"/><ellipse cx="595.0" cy="363.0" rx="2.5" ry="2.5" fill="#f8d040"/><rect x="566.5" y="379.0" width="40.5" height="2.5" fill="#f0a0c0"/><rect x="70.0" y="384.2" width="542.0" height="15.3" fill="#46441a"/><path d="M70 399.500L70.0 389.1L71.0 389.7L72.0 390.3L73.0 390.9L74.0 390.3L75.0 389.7L76.0 389.1L77.0 388.6L78.0 389.2L79.0 390.0L80.0 390.2L81.0 389.5L82.0 388.8L83.0 388.1L84.0 388.0L85.0 388.1L86.0 388.4L87.0 389.0L88.0 389.7L89.0 390.3L90.0 390.9L91.0 390.7L92.0 388.5L93.0 389.4L94.0 388.8L95.0 388.7L96.0 389.8L97.0 390.8L98.0 390.0L99.0 388.9L100.0 388.5L101.0 389.2L102.0 390.3L103.0 391.3L104.0 391.5L105.0 390.5L106.0 389.5L107.0 388.4L108.0 388.2L109.0 389.0L110.0 390.6L111.0 392.2L112.0 390.8L113.0 389.2L114.0 387.6L115.0 388.7L116.0 389.7L117.0 390.7L118.0 390.4L119.0 389.5L120.0 388.5L121.0 387.8L122.0 388.3L123.0 388.2L124.0 389.5L125.0 390.7L126.0 391.0L127.0 389.7L128.0 388.5L129.0 388.2L130.0 389.0L131.0 389.8L132.0 390.6L133.0 391.5L134.0 391.5L135.0 390.6L136.0 389.8L137.0 389.0L138.0 388.2L139.0 388.5L140.0 387.7L141.0 388.6L142.0 389.6L143.0 390.6L144.0 391.6L145.0 392.4L146.0 391.4L147.0 390.3L148.0 389.3L149.0 388.3L150.0 388.3L151.0 388.6L152.0 389.8L153.0 391.0L154.0 392.3L155.0 391.8L156.0 390.6L157.0 389.4L158.0 388.2L159.0 388.4L160.0 388.9L161.0 389.7L162.0 390.5L163.0 391.4L164.0 392.2L165.0 391.8L166.0 391.0L167.0 390.1L168.0 387.7L169.0 388.5L170.0 388.5L171.0 388.0L172.0 389.2L173.0 390.6L174.0 392.0L175.0 391.9L176.0 390.5L177.0 389.1L178.0 387.6L179.0 388.4L180.0 388.1L181.0 388.9L182.0 389.8L183.0 388.6L184.0 389.4L185.0 388.5L186.0 386.5L187.0 388.7L188.0 389.9L189.0 391.2L190.0 391.9L191.0 389.1L192.0 389.4L193.0 388.1L194.0 388.5L195.0 388.4L196.0 390.0L197.0 391.7L198.0 391.6L199.0 390.0L200.0 388.3L201.0 386.2L202.0 387.9L203.0 387.6L204.0 387.9L205.0 388.7L206.0 389.6L207.0 390.2L208.0 389.3L209.0 386.8L210.0 386.0L211.0 389.3L212.0 390.6L213.0 392.0L214.0 392.3L215.0 390.9L216.0 389.6L217.0 388.2L218.0 388.2L219.0 388.3L220.0 387.9L221.0 388.2L222.0 388.7L223.0 389.4L224.0 390.0L225.0 390.7L226.0 390.4L227.0 389.8L228.0 389.1L229.0 388.4L230.0 387.5L231.0 388.6L232.0 389.5L233.0 390.4L234.0 391.1L235.0 390.2L236.0 389.3L237.0 389.4L238.0 390.5L239.0 390.0L240.0 392.6L241.0 391.5L242.0 390.4L243.0 389.3L244.0 388.4L245.0 388.2L246.0 388.5L247.0 386.9L248.0 388.6L249.0 390.0L250.0 391.4L251.0 390.9L252.0 389.5L253.0 388.2L254.0 389.0L255.0 389.7L256.0 390.5L257.0 391.3L258.0 391.0L259.0 390.3L260.0 389.5L261.0 388.7L262.0 388.1L263.0 388.3L264.0 388.1L265.0 388.5L266.0 389.0L267.0 389.5L268.0 390.0L269.0 390.5L270.0 390.0L271.0 389.5L272.0 389.0L273.0 388.9L274.0 388.0L275.0 390.3L276.0 391.0L277.0 391.5L278.0 390.8L279.0 390.1L280.0 387.9L281.0 388.8L282.0 386.8L283.0 389.6L284.0 390.8L285.0 390.3L286.0 391.9L287.0 390.7L288.0 389.5L289.0 388.4L290.0 387.8L291.0 387.9L292.0 387.6L293.0 388.3L294.0 389.2L295.0 390.5L296.0 391.7L297.0 393.0L298.0 392.0L299.0 390.7L300.0 389.5L301.0 388.5L302.0 388.3L303.0 387.9L304.0 388.3L305.0 389.9L306.0 391.5L307.0 392.1L308.0 390.5L309.0 388.8L310.0 388.5L311.0 388.5L312.0 388.1L313.0 388.9L314.0 389.2L315.0 392.8L316.0 391.6L317.0 389.6L318.0 388.7L319.0 389.6L320.0 390.4L321.0 391.3L322.0 391.1L323.0 390.3L324.0 389.4L325.0 388.5L326.0 388.5L327.0 387.9L328.0 388.5L329.0 388.4L330.0 388.8L331.0 389.5L332.0 390.3L333.0 390.6L334.0 389.8L335.0 387.5L336.0 388.5L337.0 388.0L338.0 387.4L339.0 388.6L340.0 391.5L341.0 391.1L342.0 389.8L343.0 387.0L344.0 388.3L345.0 388.8L346.0 389.4L347.0 390.0L348.0 390.6L349.0 390.6L350.0 390.0L351.0 389.4L352.0 388.8L353.0 388.1L354.0 389.0L355.0 390.6L356.0 392.2L357.0 392.5L358.0 390.9L359.0 389.3L360.0 388.2L361.0 387.6L362.0 388.3L363.0 388.3L364.0 389.1L365.0 389.9L366.0 390.7L367.0 389.9L368.0 391.8L369.0 391.0L370.0 390.2L371.0 389.4L372.0 388.6L373.0 387.8L374.0 389.4L375.0 391.0L376.0 392.6L377.0 391.2L378.0 389.6L379.0 388.3L380.0 387.9L381.0 388.1L382.0 388.2L383.0 388.7L384.0 389.7L385.0 390.7L386.0 389.7L387.0 388.6L388.0 389.1L389.0 390.2L390.0 391.2L391.0 392.3L392.0 392.5L393.0 391.4L394.0 390.3L395.0 389.3L396.0 389.4L397.0 390.0L398.0 390.7L399.0 391.0L400.0 390.4L401.0 389.7L402.0 389.1L403.0 388.4L404.0 388.2L405.0 389.0L406.0 389.8L407.0 390.6L408.0 391.4L409.0 392.0L410.0 391.2L411.0 390.4L412.0 389.6L413.0 388.8L414.0 388.5L415.0 388.5L416.0 386.6L417.0 388.6L418.0 389.2L419.0 389.8L420.0 390.0L421.0 389.4L422.0 388.8L423.0 388.2L424.0 387.8L425.0 388.4L426.0 389.0L427.0 389.6L428.0 390.3L429.0 390.6L430.0 389.9L431.0 389.3L432.0 388.6L433.0 388.0L434.0 388.2L435.0 388.9L436.0 389.6L437.0 390.2L438.0 389.7L439.0 387.4L440.0 388.3L441.0 387.8L442.0 388.7L443.0 389.7L444.0 390.7L445.0 391.6L446.0 390.6L447.0 389.6L448.0 388.6L449.0 388.1L450.0 388.0L451.0 388.4L452.0 388.7L453.0 390.1L454.0 391.5L455.0 392.9L456.0 392.0L457.0 390.6L458.0 389.2L459.0 387.6L460.0 387.7L461.0 388.2L462.0 389.0L463.0 389.8L464.0 390.6L465.0 391.4L466.0 392.2L467.0 391.5L468.0 390.7L469.0 388.3L470.0 389.1L471.0 388.3L472.0 388.4L473.0 389.1L474.0 390.3L475.0 391.4L476.0 392.5L477.0 391.6L478.0 390.5L479.0 389.3L480.0 388.5L481.0 389.0L482.0 390.0L483.0 391.0L484.0 392.0L485.0 391.5L486.0 390.5L487.0 389.5L488.0 388.5L489.0 387.9L490.0 387.7L491.0 388.7L492.0 389.4L493.0 390.1L494.0 390.0L495.0 389.3L496.0 388.5L497.0 388.7L498.0 389.8L499.0 390.9L500.0 390.2L501.0 390.7L502.0 389.6L503.0 388.5L504.0 388.2L505.0 387.9L506.0 388.1L507.0 388.8L508.0 389.5L509.0 390.1L510.0 390.8L511.0 390.8L512.0 390.1L513.0 389.4L514.0 388.8L515.0 388.4L516.0 388.1L517.0 387.9L518.0 388.0L519.0 388.4L520.0 389.7L521.0 389.4L522.0 392.3L523.0 391.1L524.0 389.8L525.0 389.1L526.0 390.0L527.0 390.9L528.0 391.8L529.0 391.8L530.0 390.9L531.0 390.0L532.0 389.1L533.0 388.4L534.0 387.9L535.0 388.4L536.0 388.8L537.0 388.0L538.0 390.4L539.0 391.3L540.0 392.1L541.0 390.0L542.0 390.8L543.0 390.0L544.0 389.2L545.0 388.3L546.0 387.7L547.0 388.4L548.0 389.3L549.0 390.1L550.0 391.0L551.0 391.8L552.0 391.4L553.0 390.5L554.0 389.7L555.0 387.2L556.0 389.9L557.0 391.1L558.0 392.3L559.0 392.3L560.0 391.1L561.0 389.9L562.0 389.0L563.0 389.8L564.0 390.5L565.0 391.2L566.0 391.8L567.0 391.1L568.0 390.4L569.0 389.7L570.0 389.0L571.0 388.5L572.0 386.7L573.0 388.0L574.0 391.0L575.0 390.4L576.0 389.1L577.0 388.1L578.0 389.2L579.0 390.3L580.0 391.4L581.0 390.9L582.0 392.2L583.0 391.1L584.0 390.0L585.0 388.9L586.0 387.8L587.0 387.6L588.0 387.5L589.0 388.5L590.0 387.6L591.0 389.9L592.0 390.7L593.0 391.2L594.0 390.5L595.0 389.7L596.0 388.9L597.0 389.8L598.0 390.6L599.0 391.5L600.0 389.8L601.0 390.6L602.0 389.7L603.0 388.9L604.0 388.0L605.0 388.1L606.0 387.9L607.0 389.1L608.0 390.5L609.0 391.8L610.0 392.6L611.0 391.2L612 399.500Z" fill="#c6ca5a"/><rect x="70.0" y="384.2" width="542.0" height="1.2" fill="#2a2a0e"/></g></g>
<rect x="70.400" y="359.600" width="541.200" height="39.700" rx="3" fill="none" stroke="#c6caca" stroke-width="1.100"/>
<g fill="#f4f4f4"><rect x="76" y="364.400" width="3.400" height="3.400" rx=".7"/><rect x="80.400" y="364.400" width="3.400" height="3.400" rx=".7"/><rect x="76" y="368.800" width="3.400" height="3.400" rx=".7"/><rect x="80.400" y="368.800" width="3.400" height="3.400" rx=".7"/></g>
<rect x="135.500" y="363.600" width="9.400" height="9.400" rx="2" fill="#2a1c2c"/><path d="M137.200 367L138.600 365.200H141.800L143.200 367L140.200 371Z" fill="#f0508c"/><path d="M137.200 367H143.200" stroke="#f8a0c0" stroke-width=".5"/>
<rect x="302.400" y="372.400" width="33.200" height="12.800" rx="3" fill="#22343a"/><rect x="341" y="372.400" width="38" height="12.800" rx="3" fill="#22343a"/>
<rect x="270.5" y="307.500" width="66.500" height="45" rx="4" fill="#31373d"/>
<rect x="343.5" y="307.500" width="66.500" height="45" rx="4" fill="#31373d"/>
<rect x="416.5" y="307.500" width="66.500" height="45" rx="4" fill="#31373d"/>
<rect x="199" y="310.600" width="66.400" height="38" rx="3.500" fill="#d6d3cf" stroke="#4fd8b0" stroke-width="2"/>
<clipPath id="c5"><rect x="200" y="311.6" width="64.4" height="36" rx="2"/></clipPath>
<g clip-path="url(#c5)"><g transform="translate(200 311.6)" filter="url(#b06)"><rect width="65" height="36" fill="#d8d5d1"/>
<rect x="58" y="0" width="7" height="36" fill="#5a6a66"/>
<rect y="31" width="65" height="5" fill="#c8beb0"/>
<path d="M14 36C16 27 24 24 31 24C38 24 46 27 49 36Z" fill="#f0efed"/>
<path d="M19 30L24 17L28 19L25 31Z" fill="#e4b898"/>
<path d="M44 30L38 17L34 19L38 31Z" fill="#e4b898"/>
<ellipse cx="31" cy="14" rx="7" ry="7.500" fill="#20140e"/>
<ellipse cx="31" cy="17" rx="5" ry="5" fill="#d8a888"/>
<g fill="#3a3e48"><rect x="22" y="28" width="1.200" height="1.200"/><rect x="28" y="30" width="1.200" height="1.200"/><rect x="35" y="29" width="1.200" height="1.200"/><rect x="41" y="31" width="1.200" height="1.200"/><rect x="31" y="33" width="1.200" height="1.200"/></g></g></g>
<rect x="223" y="321" width="16" height="15" rx="3.500" fill="#1c2024"/>
<g transform="translate(231 328)" fill="none" stroke="#f0f2f4" stroke-width=".9" stroke-linecap="round" stroke-linejoin="round"><path d="M-2.800 1.200L1.600 -3.600Q2.600 -4.200 3.400 -3.400Q4.200 -2.400 3.400 -1.600L-1 3L-3.200 3.400Z"/><path d="M-3.400 5.200H3.400" stroke-width="1"/></g>
<rect x="201" y="339.6" width="17.5" height="8.600" rx="2" fill="#48d2aa"/>
<clipPath id="c6"><rect x="273.6" y="310.4" width="60.4" height="39.2" rx="2"/></clipPath>
<g clip-path="url(#c6)"><g transform="translate(273.6 310.4)" filter="url(#b06)"><rect width="61" height="40" fill="#2a2623"/>
<rect x="0" y="0" width="22" height="11" fill="#e2e0dc"/>
<rect x="22" y="0" width="7" height="22" fill="#5a5650"/>
<rect x="29" y="0" width="32" height="6" fill="#4a4642"/>
<rect x="52" y="4" width="9" height="10" fill="#c8c4c0"/>
<rect x="0" y="11" width="30" height="12" fill="#3a3632"/>
<rect y="33" width="61" height="7" fill="#d0ac80"/>
<rect y="27" width="61" height="6" fill="#5a4a3c"/>
<path d="M30 34C32 24 40 20 48 21C55 22 59 28 59 35Z" fill="#e6e4e2"/>
<path d="M5 25L32 22L33 27L6 28Z" fill="#e0dedc"/>
<ellipse cx="3.500" cy="26" rx="2.500" ry="1.800" fill="#dca888"/>
<ellipse cx="41" cy="14" rx="6" ry="6.500" fill="#dca888"/>
<path d="M34.500 14C33 4 48 3 48 13C47 17 46 18 45 18C45 13 42 10 38 10C36.500 10 35.500 12 34.500 14Z" fill="#24160f"/>
<rect x="27" y="33" width="6" height="3.500" fill="#48a050"/>
<path d="M18 36L22 31L30 33" stroke="#e8dcc8" stroke-width="1.200" fill="none"/></g></g>
<rect x="296" y="321" width="16" height="15" rx="3.500" fill="#1c2024"/>
<g transform="translate(304 328)" fill="none" stroke="#f0f2f4" stroke-width=".9" stroke-linecap="round" stroke-linejoin="round"><path d="M-2.800 1.200L1.600 -3.600Q2.600 -4.200 3.400 -3.400Q4.200 -2.400 3.400 -1.600L-1 3L-3.200 3.400Z"/><path d="M-3.400 5.200H3.400" stroke-width="1"/></g>
<rect x="273" y="339.6" width="17.5" height="8.600" rx="2" fill="#48d2aa"/>
<clipPath id="c7"><rect x="347" y="310.4" width="59.4" height="39.2" rx="2"/></clipPath>
<g clip-path="url(#c7)"><g transform="translate(347 310.4)" filter="url(#b06)"><rect width="60" height="40" fill="#efeeec"/>
<rect x="0" y="0" width="16" height="28" fill="#f8f8f6"/>
<rect x="16" y="0" width="3" height="28" fill="#d8d6d2"/>
<rect x="40" y="0" width="5" height="28" fill="#c4c2be"/>
<rect x="49" y="0" width="6" height="30" fill="#4a4844"/>
<rect x="55" y="0" width="5" height="30" fill="#dcdad6"/>
<rect y="28" width="60" height="12" fill="#d2bea2"/>
<path d="M14 36C16 26 22 19 28 19C35 19 40 26 42 36Z" fill="#f4f3f1"/>
<path d="M10 37C14 33 44 33 48 37L46 40H12Z" fill="#e6d6c6"/>
<ellipse cx="28" cy="12" rx="5.500" ry="6" fill="#24160f"/>
<rect x="25" y="16.500" width="6" height="3" fill="#d8a888"/>
<rect x="38" y="30" width="9" height="4" fill="#3a2e24"/>
<rect x="10" y="33" width="6" height="3" fill="#786858"/></g></g>
<rect x="368" y="321" width="16" height="15" rx="3.500" fill="#1c2024"/>
<g transform="translate(376 328)" fill="none" stroke="#f0f2f4" stroke-width=".9" stroke-linecap="round" stroke-linejoin="round"><path d="M-2.800 1.200L1.600 -3.600Q2.600 -4.200 3.400 -3.400Q4.200 -2.400 3.400 -1.600L-1 3L-3.200 3.400Z"/><path d="M-3.400 5.200H3.400" stroke-width="1"/></g>
<rect x="346" y="339.6" width="17.5" height="8.600" rx="2" fill="#48d2aa"/>
<clipPath id="c8"><rect x="420" y="310.4" width="58.4" height="39.2" rx="2"/></clipPath>
<g clip-path="url(#c8)"><g transform="translate(420 310.4)" filter="url(#b06)"><rect width="59" height="40" fill="#3a3430"/>
<rect x="0" y="0" width="59" height="7" fill="#1c1816"/>
<path d="M6 8L20 4L30 8L22 14L10 13Z" fill="#38424a"/>
<rect x="0" y="14" width="40" height="12" fill="#4a423a"/>
<rect x="0" y="24" width="59" height="4" fill="#18120e"/>
<rect y="28" width="59" height="12" fill="#b08454"/>
<path d="M0 30L25 28L25 40H0Z" fill="#7a5434"/>
<path d="M30 32C30 20 36 15 42 15C50 16 53 24 54 30C56 33 52 35 46 35Z" fill="#eceae8"/>
<path d="M36 30C42 28 54 29 57 33C56 36 44 36 36 34Z" fill="#f0eeec"/>
<ellipse cx="36" cy="11" rx="5" ry="5.500" fill="#2a1a12"/>
<ellipse cx="34.500" cy="13.500" rx="3" ry="3" fill="#d8a888"/>
<rect x="22" y="34" width="5" height="3" fill="#48a050"/>
<rect x="30" y="36" width="4" height="2" fill="#e04040"/>
<path d="M8 34L30 37" stroke="#d8b888" stroke-width="1.500"/></g></g>
<rect x="441" y="321" width="16" height="15" rx="3.500" fill="#1c2024"/>
<g transform="translate(449 328)" fill="none" stroke="#f0f2f4" stroke-width=".9" stroke-linecap="round" stroke-linejoin="round"><path d="M-2.800 1.200L1.600 -3.600Q2.600 -4.200 3.400 -3.400Q4.200 -2.400 3.400 -1.600L-1 3L-3.200 3.400Z"/><path d="M-3.400 5.200H3.400" stroke-width="1"/></g>
<rect x="418" y="339.6" width="17.5" height="8.600" rx="2" fill="#48d2aa"/>
<path d="M388.300 380.300L443.800 351.300V365.300H499.200V394.600H443.800V409.200Z" fill="#ee1c24"/>
<rect x="541.800" y="290" width="1.600" height="131" fill="#f06464"/>
<path d="M538.800 286.600H546.400Q547 286.600 547 287.400V291L542.600 294.600L538.200 291V287.400Q538.200 286.600 538.800 286.600Z" fill="#f06464"/>
<rect x="536" y="327.200" width="14.400" height="22.400" rx="7.200" fill="#f06464"/>
<g transform="translate(543.2 338.4)" fill="none" stroke="#ffffff" stroke-width=".8" stroke-linecap="round"><g transform="scale(1.300)"><path d="M-2.200 -3.600L1.600 1.600M2.200 -3.600L-1.600 1.600"/><circle cx="-2" cy="2.600" r="1.200"/><circle cx="2" cy="2.600" r="1.200"/></g></g>
<circle cx="74" cy="414" r="3" fill="#5a6066"/><circle cx="348" cy="414" r="3" fill="#5a6066"/>
</g>
<g id="labels">
<text x="22.5" y="15.6" font-size="9.5" fill="#e2e4e6" textLength="70.5" lengthAdjust="spacingAndGlyphs">Wondershare Filmora</text>
<text x="116" y="15.6" font-size="9" fill="#d8dadc" textLength="11.5" lengthAdjust="spacingAndGlyphs">File</text>
<text x="142.5" y="15.6" font-size="9" fill="#d8dadc" textLength="12.5" lengthAdjust="spacingAndGlyphs">Edit</text>
<text x="170.5" y="15.6" font-size="9" fill="#d8dadc" textLength="17.5" lengthAdjust="spacingAndGlyphs">Tools</text>
<text x="203" y="15.6" font-size="9" fill="#d8dadc" textLength="16" lengthAdjust="spacingAndGlyphs">View</text>
<text x="234" y="15.6" font-size="9" fill="#d8dadc" textLength="15.5" lengthAdjust="spacingAndGlyphs">Help</text>
<text x="264.5" y="15.6" font-size="9" fill="#d8dadc" textLength="24.5" lengthAdjust="spacingAndGlyphs">Version</text>
<text x="349.5" y="15.6" font-size="9" fill="#d8dadc" textLength="26.5" lengthAdjust="spacingAndGlyphs">Untitled</text>
<text x="626.2" y="15.7" font-size="9" fill="#d8dadc" textLength="20" lengthAdjust="spacingAndGlyphs">92816</text>
<text x="667.5" y="16" font-size="9" fill="#10262a" font-weight="bold" textLength="22.5" lengthAdjust="spacingAndGlyphs">Export</text>
<text x="15" y="53" font-size="9" fill="#4fd8b0" textLength="20" lengthAdjust="spacingAndGlyphs">Media</text>
<text x="45" y="53" font-size="9" fill="#d4d7da" textLength="40.5" lengthAdjust="spacingAndGlyphs">Stock Media</text>
<text x="95.5" y="53" font-size="9" fill="#d4d7da" textLength="20" lengthAdjust="spacingAndGlyphs">Audio</text>
<text x="132" y="53" font-size="9" fill="#d4d7da" textLength="17.5" lengthAdjust="spacingAndGlyphs">Titles</text>
<text x="160.5" y="53" font-size="9" fill="#d4d7da" textLength="35" lengthAdjust="spacingAndGlyphs">Transitions</text>
<text x="204.5" y="53" font-size="9" fill="#d4d7da" textLength="22" lengthAdjust="spacingAndGlyphs">Effects</text>
<text x="240.5" y="53" font-size="9" fill="#d4d7da" textLength="20" lengthAdjust="spacingAndGlyphs">Filters</text>
<text x="273" y="53" font-size="9" fill="#d4d7da" textLength="25.5" lengthAdjust="spacingAndGlyphs">Stickers</text>
<text x="305.5" y="53" font-size="9" fill="#d4d7da" textLength="33.5" lengthAdjust="spacingAndGlyphs">Templates</text>
<text x="24.5" y="78.5" font-size="8.5" fill="#d0d3d6" font-weight="bold" textLength="47" lengthAdjust="spacingAndGlyphs">Project Media</text>
<text x="24.5" y="128.5" font-size="8.5" fill="#d0d3d6" textLength="45.5" lengthAdjust="spacingAndGlyphs">Global Media</text>
<text x="24.5" y="153.5" font-size="8.5" fill="#d0d3d6" textLength="43" lengthAdjust="spacingAndGlyphs">Cloud Media</text>
<text x="24.5" y="178.5" font-size="8.5" fill="#d0d3d6" textLength="50.5" lengthAdjust="spacingAndGlyphs">Editing Presets</text>
<text x="24.5" y="203.5" font-size="8.5" fill="#d0d3d6" textLength="43" lengthAdjust="spacingAndGlyphs">Influence Kit</text>
<text x="24.5" y="103.5" font-size="8.5" fill="#4fd8b0" font-weight="bold" textLength="21.5" lengthAdjust="spacingAndGlyphs">Folder</text>
<text x="120" y="75.5" font-size="8.5" fill="#d4d7da" textLength="22.2" lengthAdjust="spacingAndGlyphs">Import</text>
<text x="183.6" y="75.5" font-size="8.5" fill="#d4d7da" textLength="23.1" lengthAdjust="spacingAndGlyphs">Record</text>
<text x="248.2" y="75.9" font-size="8.5" fill="#8a8f94" textLength="44.4" lengthAdjust="spacingAndGlyphs">Search media</text>
<text x="115" y="97.6" font-size="7.2" fill="#d0d3d6" font-weight="bold" textLength="22.5" lengthAdjust="spacingAndGlyphs">FOLDER</text>
<text x="117.2" y="155.6" font-size="8.5" fill="#d4d7da" textLength="44.6" lengthAdjust="spacingAndGlyphs">Import Media</text>
<text x="193.4" y="155.6" font-size="8.5" fill="#d4d7da" textLength="43.1" lengthAdjust="spacingAndGlyphs">my son clip 4</text>
<text x="269.6" y="155.6" font-size="8.5" fill="#d4d7da" textLength="43.1" lengthAdjust="spacingAndGlyphs">my son clip 3</text>
<text x="117.2" y="207.6" font-size="8.5" fill="#d4d7da" textLength="43.1" lengthAdjust="spacingAndGlyphs">my son clip 2</text>
<text x="193.4" y="207.6" font-size="8.5" fill="#d4d7da" textLength="37.6" lengthAdjust="spacingAndGlyphs">my son clip</text>
<text x="377.5" y="40.6" font-size="8.5" fill="#d4d7da" textLength="20" lengthAdjust="spacingAndGlyphs">Player</text>
<text x="412.3" y="40.6" font-size="8.5" fill="#d4d7da" textLength="36.5" lengthAdjust="spacingAndGlyphs">Full Quality</text>
<text x="520.8" y="224.2" font-size="8" fill="#d8dadc" textLength="37.4" lengthAdjust="spacingAndGlyphs">00:00:12:15</text>
<text x="571.8" y="224.2" font-size="8" fill="#b0b4b8" textLength="2.6" lengthAdjust="spacingAndGlyphs">/</text>
<text x="580" y="224.2" font-size="8" fill="#d8dadc" textLength="37.4" lengthAdjust="spacingAndGlyphs">00:00:14:11</text>
<text x="472.3" y="246.6" font-size="10" fill="#dfe1e3">{</text>
<text x="493.3" y="246.6" font-size="10" fill="#dfe1e3">}</text>
<text x="651" y="41.9" font-size="8.5" fill="#4fd8b0" textLength="13" lengthAdjust="spacingAndGlyphs">Text</text>
<text x="692.7" y="41.9" font-size="8.5" fill="#e2e4e6" textLength="19.2" lengthAdjust="spacingAndGlyphs">Video</text>
<text x="738" y="41.9" font-size="8.5" fill="#e2e4e6" textLength="19" lengthAdjust="spacingAndGlyphs">Audio</text>
<text x="647.5" y="68" font-size="8.5" fill="#c4c8cc" textLength="55.2" lengthAdjust="spacingAndGlyphs">Paragraph 1 text</text>
<text x="647.5" y="127.3" font-size="8.5" fill="#c4c8cc" textLength="56.2" lengthAdjust="spacingAndGlyphs">Paragraph 2 text</text>
<text x="647.5" y="187.3" font-size="8.5" fill="#c4c8cc" textLength="56.2" lengthAdjust="spacingAndGlyphs">Paragraph 3 text</text>
<text x="650" y="85.4" font-size="8.5" fill="#d8dbde" textLength="41" lengthAdjust="spacingAndGlyphs">Hello, Keanu</text>
<text x="650.3" y="145.7" font-size="8.5" fill="#d8dbde" textLength="75" lengthAdjust="spacingAndGlyphs">HAPPY CHILDREN DAY</text>
<text x="650.3" y="203.3" font-size="8.5" fill="#f0f2f4" textLength="33.4" lengthAdjust="spacingAndGlyphs">For today,</text>
<text x="650.3" y="213.3" font-size="8.5" fill="#f0f2f4" textLength="25.7" lengthAdjust="spacingAndGlyphs">You can</text>
<text x="650.3" y="223.3" font-size="8.5" fill="#f0f2f4" textLength="71" lengthAdjust="spacingAndGlyphs">Play games everyday!</text>
<text x="214.6" y="279.4" font-size="4.6" fill="#dfe1e3" font-weight="bold" textLength="4.6" lengthAdjust="spacingAndGlyphs">AI</text>
<text x="70.0" y="294.6" font-size="7.5" fill="#9ea3a8" textLength="31.8" lengthAdjust="spacingAndGlyphs">00:00:00:00</text>
<text x="107.56" y="294.6" font-size="7.5" fill="#9ea3a8" textLength="31.8" lengthAdjust="spacingAndGlyphs">00:00:01:00</text>
<text x="145.12" y="294.6" font-size="7.5" fill="#9ea3a8" textLength="31.8" lengthAdjust="spacingAndGlyphs">00:00:02:00</text>
<text x="182.68" y="294.6" font-size="7.5" fill="#9ea3a8" textLength="31.8" lengthAdjust="spacingAndGlyphs">00:00:03:00</text>
<text x="220.24" y="294.6" font-size="7.5" fill="#9ea3a8" textLength="31.8" lengthAdjust="spacingAndGlyphs">00:00:04:00</text>
<text x="257.8" y="294.6" font-size="7.5" fill="#9ea3a8" textLength="31.8" lengthAdjust="spacingAndGlyphs">00:00:05:00</text>
<text x="295.36" y="294.6" font-size="7.5" fill="#9ea3a8" textLength="31.8" lengthAdjust="spacingAndGlyphs">00:00:06:00</text>
<text x="332.92" y="294.6" font-size="7.5" fill="#9ea3a8" textLength="31.8" lengthAdjust="spacingAndGlyphs">00:00:07:00</text>
<text x="370.48" y="294.6" font-size="7.5" fill="#9ea3a8" textLength="31.8" lengthAdjust="spacingAndGlyphs">00:00:08:00</text>
<text x="408.04" y="294.6" font-size="7.5" fill="#9ea3a8" textLength="31.8" lengthAdjust="spacingAndGlyphs">00:00:09:00</text>
<text x="445.6" y="294.6" font-size="7.5" fill="#9ea3a8" textLength="31.8" lengthAdjust="spacingAndGlyphs">00:00:10:00</text>
<text x="483.16" y="294.6" font-size="7.5" fill="#9ea3a8" textLength="31.8" lengthAdjust="spacingAndGlyphs">00:00:11:00</text>
<text x="520.72" y="294.6" font-size="7.5" fill="#9ea3a8" textLength="31.8" lengthAdjust="spacingAndGlyphs">00:00:12:00</text>
<text x="558.28" y="294.6" font-size="7.5" fill="#9ea3a8" textLength="31.8" lengthAdjust="spacingAndGlyphs">00:00:13:00</text>
<text x="595.84" y="294.6" font-size="7.5" fill="#9ea3a8" textLength="31.8" lengthAdjust="spacingAndGlyphs">00:00:14:00</text>
<text x="12.6" y="376" font-size="8.8" fill="#b4b9be" textLength="21" lengthAdjust="spacingAndGlyphs">Video 1</text>
<text x="13" y="411.4" font-size="8" fill="#8a8f94" textLength="21.5" lengthAdjust="spacingAndGlyphs" clip-path="url(#a1c)">Audio 1</text>
<text x="88" y="371.6" font-size="8.5" fill="#ffffff" textLength="27" lengthAdjust="spacingAndGlyphs">Children</text>
<text x="309.6" y="382" font-size="8.5" fill="#d4d8da" textLength="18.4" lengthAdjust="spacingAndGlyphs">Close</text>
<text x="348" y="382" font-size="8.5" fill="#d4d8da" textLength="24" lengthAdjust="spacingAndGlyphs">Expand</text>
<text x="202.6" y="346.6" font-size="7.5" fill="#123a32" font-weight="bold" textLength="14.3" lengthAdjust="spacingAndGlyphs">2.76s</text>
<text x="274.6" y="346.6" font-size="7.5" fill="#123a32" font-weight="bold" textLength="14.3" lengthAdjust="spacingAndGlyphs">4.44s</text>
<text x="347.6" y="346.6" font-size="7.5" fill="#123a32" font-weight="bold" textLength="14.3" lengthAdjust="spacingAndGlyphs">3.60s</text>
<text x="419.6" y="346.6" font-size="7.5" fill="#123a32" font-weight="bold" textLength="14.3" lengthAdjust="spacingAndGlyphs">3.64s</text>
</g>
</svg>
</div></body></html>
